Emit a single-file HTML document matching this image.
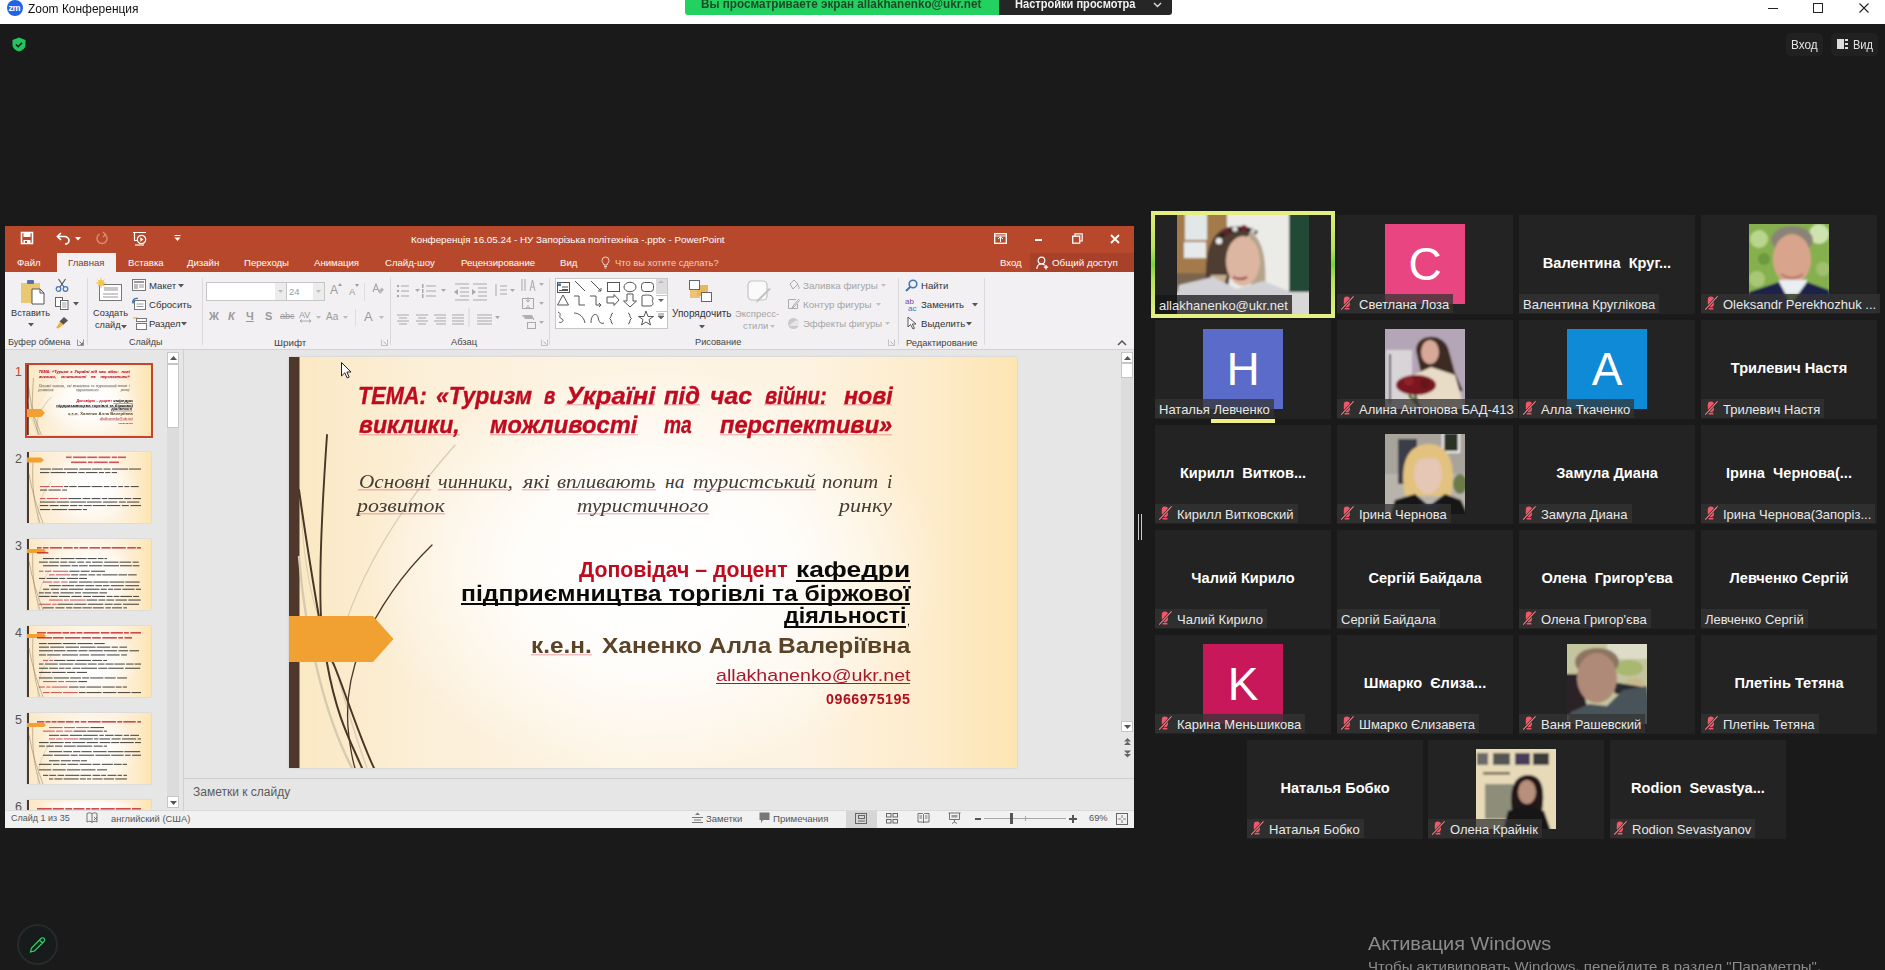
<!DOCTYPE html>
<html><head><meta charset="utf-8">
<style>
*{margin:0;padding:0;box-sizing:border-box}
html,body{width:1885px;height:970px;overflow:hidden;background:#1a1a1a;font-family:"Liberation Sans",sans-serif}
.a{position:absolute}
.t{position:absolute;white-space:nowrap;line-height:1}
/* title bar */
#tb{left:0;top:0;width:1885px;height:24px;background:#fff}
/* gallery */
.tile{position:absolute;width:176px;height:99px;background:#232323}
.lbl{position:absolute;left:0;bottom:1px;height:19px;background:rgba(52,52,52,.75);color:#e8e8e8;font-size:13px;line-height:22px;padding:0 4px 0 4px;white-space:nowrap}
.lbl.m{padding-left:22px}
.mic{position:absolute;left:4px;top:2px;width:13px;height:14px}
.cn{position:absolute;left:0;width:176px;top:40px;text-align:center;color:#fff;font-weight:bold;font-size:14.6px;line-height:17px;white-space:pre}
.wv{position:absolute;height:2px;background:linear-gradient(180deg,rgba(225,80,100,.38) 0 1px,rgba(225,80,100,.18) 1px 2px)}
.av{position:absolute;left:48px;top:9px;width:80px;height:80px;color:#fff;font-size:46px;text-align:center;line-height:80px}
</style></head><body>
<!-- Zoom title bar -->
<div class="a" style="left:0;top:0;width:1885px;height:24px;background:#fff"></div>
<div class="a" style="left:7px;top:0px;width:16px;height:16px;border-radius:50%;background:#1f63e6"></div>
<div class="t" style="left:8.5px;top:3.5px;font-size:9px;color:#fff;font-weight:bold;letter-spacing:-.4px">zm</div>
<div class="a" style="left:1768px;top:8px;width:10px;height:1px;background:#222"></div>
<div class="a" style="left:1813px;top:3px;width:10px;height:10px;border:1px solid #222"></div>
<svg class="a" style="left:1859px;top:3px" width="10" height="10" viewBox="0 0 10 10"><path d="M0.5 0.5L9.5 9.5M9.5 0.5L0.5 9.5" stroke="#222" stroke-width="1.1"/></svg>
<!-- green banner -->
<div class="a" style="left:685px;top:0;width:314px;height:15px;background:#23d160;border-bottom-left-radius:3px"></div>
<div class="a" style="left:999px;top:0;width:173px;height:15px;background:#262626;border-bottom-right-radius:3px"></div>
<svg class="a" style="left:1153px;top:2px" width="9" height="6" viewBox="0 0 9 6"><path d="M1 1L4.5 4.5L8 1" stroke="#ddd" stroke-width="1.4" fill="none"/></svg>
<!-- shield -->
<svg class="a" style="left:12px;top:37px" width="14" height="15" viewBox="0 0 14 15"><path d="M7 0.5L13.5 3V7.5C13.5 11 10.8 13.5 7 14.5C3.2 13.5 0.5 11 0.5 7.5V3Z" fill="#23c45e"/><path d="M4 7.5L6.2 9.7L10 5.7" stroke="#1a1a1a" stroke-width="1.6" fill="none"/></svg>
<!-- top-right buttons -->
<div class="a" style="left:1786px;top:33px;width:37px;height:23px;border-radius:5px;background:#212121"></div>
<div class="a" style="left:1831px;top:33px;width:47px;height:23px;border-radius:5px;background:#212121"></div>
<div class="a" style="left:1837px;top:39px;width:7px;height:10px;background:#ddd"></div>
<div class="a" style="left:1845px;top:39px;width:3px;height:2px;background:#ddd"></div>
<div class="a" style="left:1845px;top:43px;width:3px;height:2px;background:#ddd"></div>
<div class="a" style="left:1845px;top:47px;width:3px;height:2px;background:#ddd"></div>
<div class="t" style="left:28px;top:2.40px;font-size:13px;color:#111;transform:scale(0.9198,1);transform-origin:0 11.00px">Zoom Конференция</div>
<div class="t" style="left:701px;top:-1.70px;font-size:12.5px;font-weight:bold;color:#1c4a28;transform:scale(0.9371,1);transform-origin:0 10.00px">Вы просматриваете экран allakhanenko@ukr.net</div>
<div class="t" style="left:1015px;top:-1.70px;font-size:12.5px;font-weight:bold;color:#f2f2f2;transform:scale(0.8850,1);transform-origin:0 10.00px">Настройки просмотра</div>
<div class="t" style="left:1791px;top:38.60px;font-size:12.5px;color:#e6e6e6;transform:scale(0.9406,1);transform-origin:0 10.00px">Вход</div>
<div class="t" style="left:1853.4px;top:38.60px;font-size:12.5px;color:#e6e6e6;transform:scale(0.8840,1);transform-origin:0 10.00px">Вид</div>
<div class="t" style="left:1368.3px;top:934.70px;font-size:18px;color:#8c8c8c;transform:scale(1.1037,1);transform-origin:0 15.00px">Активация Windows</div>
<div class="t" style="left:1368.3px;top:959.50px;font-size:13px;color:#8c8c8c;transform:scale(1.1537,1);transform-origin:0 11.00px">Чтобы активировать Windows, перейдите в раздел &quot;Параметры&quot;.</div>
<!-- pencil -->
<div class="a" style="left:17px;top:924px;width:41px;height:41px;border-radius:50%;border:2px solid #252a2b;background:#181b1b"></div>
<svg class="a" style="left:28px;top:935px" width="19" height="19" viewBox="0 0 19 19"><path d="M2.5 17L3.5 13L13 3.5C14 2.5 15 2.5 16 3.5C17 4.5 17 5.5 16 6.5L6.5 16Z M11.5 5L14.5 8" stroke="#37d46e" stroke-width="1.1" fill="#0b2a16"/></svg>

<!-- PPT WINDOW -->
<div class="a" style="left:5px;top:226px;width:1129px;height:602px;background:#e6e6e6"></div>
<div class="a" style="left:5px;top:226px;width:1129px;height:47px;background:#b8482b"></div>
<div class="a" style="left:1030px;top:253px;width:104px;height:19px;background:#a8412a"></div>
<div class="a" style="left:57px;top:253px;width:59px;height:20px;background:#f2f0f2"></div>
<div class="a" style="left:5px;top:272px;width:1129px;height:77px;background:#f2f0f2"></div>
<div class="a" style="left:5px;top:349px;width:1129px;height:1px;background:#d2d2d2"></div>
<!-- QAT -->
<svg class="a" style="left:20px;top:231px" width="14" height="14" viewBox="0 0 14 14"><path d="M1.5 1.5H12.5V12.5H1.5Z" stroke="#fff" stroke-width="1.6" fill="none"/><rect x="3.5" y="1.5" width="7" height="4.5" fill="#fff"/><rect x="3.5" y="9" width="7" height="3.5" fill="#fff"/><rect x="5" y="10" width="2" height="2" fill="#b8482b"/></svg>
<svg class="a" style="left:56px;top:231px" width="15" height="14" viewBox="0 0 15 14"><path d="M5 2L1.5 5.5L5 9" stroke="#fff" stroke-width="1.7" fill="none"/><path d="M2 5.5H8.5C11 5.5 13 7.5 13 9.5C13 11.5 11 13 9 13" stroke="#fff" stroke-width="1.7" fill="none"/></svg>
<svg class="a" style="left:75px;top:237px" width="6" height="4" viewBox="0 0 6 4"><path d="M0 0H6L3 3.5Z" fill="#fff"/></svg>
<svg class="a" style="left:95px;top:231px" width="14" height="14" viewBox="0 0 14 14"><path d="M9.5 3.2A5 5 0 1 1 4.5 3.2" stroke="#d98a73" stroke-width="1.5" fill="none"/><path d="M8 1L10.5 3.5L8 6" stroke="#d98a73" stroke-width="1.4" fill="none"/></svg>
<svg class="a" style="left:132px;top:231px" width="15" height="15" viewBox="0 0 15 15"><path d="M1 1.5H14M2.5 1.5V9.5H6" stroke="#fff" stroke-width="1.2" fill="none"/><circle cx="9.5" cy="8.5" r="4.2" stroke="#fff" stroke-width="1.2" fill="none"/><path d="M8.3 6.3L11.5 8.5L8.3 10.7Z" fill="#fff"/><path d="M3 14H12" stroke="#fff" stroke-width="1.1"/></svg>
<svg class="a" style="left:174px;top:235px" width="7" height="7" viewBox="0 0 7 7"><path d="M0.5 0.5H6.5" stroke="#fff" stroke-width="1"/><path d="M0.5 2.5H6.5L3.5 6Z" fill="#fff"/></svg>
<div class="t" style="left:411px;top:235px;font-size:9.8px;color:#fff">Конференція 16.05.24 - НУ Запорізька політехніка -.pptx - PowerPoint</div>
<!-- window buttons -->
<svg class="a" style="left:994px;top:233px" width="13" height="11" viewBox="0 0 13 11"><rect x="0.7" y="0.7" width="11.6" height="9.6" stroke="#fff" stroke-width="1.3" fill="none"/><path d="M1 3H12M4 6L6.5 3.8L9 6M6.5 4V9" stroke="#fff" stroke-width="1" fill="none"/></svg>
<div class="a" style="left:1035px;top:239px;width:7px;height:2px;background:#fff"></div>
<svg class="a" style="left:1072px;top:233px" width="11" height="11" viewBox="0 0 11 11"><rect x="0.7" y="3.2" width="7" height="7" stroke="#fff" stroke-width="1.3" fill="none"/><path d="M3 3V0.8H10.2V8H8" stroke="#fff" stroke-width="1.2" fill="none"/></svg>
<svg class="a" style="left:1110px;top:234px" width="10" height="10" viewBox="0 0 10 10"><path d="M1 1L9 9M9 1L1 9" stroke="#fff" stroke-width="1.8"/></svg>
<!-- tabs -->
<div class="t" style="left:17px;top:258px;font-size:9.6px;color:#fff">Файл</div>
<div class="t" style="left:68px;top:258px;font-size:9.6px;color:#7b3b2a">Главная</div>
<div class="t" style="left:128px;top:258px;font-size:9.6px;color:#fff">Вставка</div>
<div class="t" style="left:187px;top:258px;font-size:9.6px;color:#fff">Дизайн</div>
<div class="t" style="left:244px;top:258px;font-size:9.6px;color:#fff">Переходы</div>
<div class="t" style="left:314px;top:258px;font-size:9.6px;color:#fff">Анимация</div>
<div class="t" style="left:385px;top:258px;font-size:9.6px;color:#fff">Слайд-шоу</div>
<div class="t" style="left:461px;top:258px;font-size:9.6px;color:#fff">Рецензирование</div>
<div class="t" style="left:560px;top:258px;font-size:9.6px;color:#fff">Вид</div>
<svg class="a" style="left:601px;top:256px" width="9" height="13" viewBox="0 0 9 13"><path d="M4.5 1A3.5 3.5 0 0 1 8 4.5C8 6.5 6.3 7.3 6 9H3C2.7 7.3 1 6.5 1 4.5A3.5 3.5 0 0 1 4.5 1Z" stroke="#f3d6cc" stroke-width="1" fill="none"/><path d="M3 10.5H6M3.5 12H5.5" stroke="#f3d6cc" stroke-width="1"/></svg>
<div class="t" style="left:615px;top:258px;font-size:9.4px;color:#f1cfc4">Что вы хотите сделать?</div>
<div class="t" style="left:1000px;top:258px;font-size:9.6px;color:#fff">Вход</div>
<svg class="a" style="left:1036px;top:256px" width="13" height="14" viewBox="0 0 13 14"><circle cx="5.5" cy="4.5" r="3.3" stroke="#fff" stroke-width="1.2" fill="none"/><path d="M0.8 13C1 9.5 3 8 5.5 8C7 8 8 8.5 8.8 9.2" stroke="#fff" stroke-width="1.2" fill="none"/><path d="M10 9V13.5M7.8 11.2H12.2" stroke="#fff" stroke-width="1.3"/></svg>
<div class="t" style="left:1052px;top:258px;font-size:9.8px;color:#fff">Общий доступ</div>
<!-- RIBBON -->
<!-- clipboard -->
<svg class="a" style="left:20px;top:279px" width="25" height="26" viewBox="0 0 25 26"><rect x="1" y="4" width="19" height="20" fill="#e8c872"/><rect x="7" y="1" width="7" height="4" rx="1" fill="#5b6fa8"/><path d="M12 10H20L24 14V25H12Z" fill="#fff" stroke="#555" stroke-width="1"/><path d="M20 10V14H24" stroke="#555" stroke-width="1" fill="none"/></svg>
<div class="t" style="left:11px;top:309px;font-size:9.2px;color:#333">Вставить</div>
<svg class="a" style="left:28px;top:323px" width="6" height="4" viewBox="0 0 6 4"><path d="M0 0H6L3 3.5Z" fill="#555"/></svg>
<svg class="a" style="left:55px;top:278px" width="14" height="14" viewBox="0 0 14 14"><path d="M3.5 1L9 9M10.5 1L5 9" stroke="#555" stroke-width="1.1"/><circle cx="3.5" cy="11" r="2.3" stroke="#3f76b8" stroke-width="1.2" fill="none"/><circle cx="10.5" cy="11" r="2.3" stroke="#3f76b8" stroke-width="1.2" fill="none"/></svg>
<svg class="a" style="left:55px;top:297px" width="14" height="13" viewBox="0 0 14 13"><rect x="0.5" y="0.5" width="7" height="9" fill="#fff" stroke="#666"/><rect x="5.5" y="3.5" width="7.5" height="9" fill="#fff" stroke="#666"/><path d="M7 6H11.5M7 8H11.5M7 10H11.5" stroke="#888" stroke-width=".8"/></svg>
<svg class="a" style="left:73px;top:302px" width="6" height="4" viewBox="0 0 6 4"><path d="M0 0H6L3 3.5Z" fill="#555"/></svg>
<svg class="a" style="left:55px;top:316px" width="14" height="13" viewBox="0 0 14 13"><path d="M9 1L13 4.5L8 9L4.5 5.5Z" fill="#555"/><path d="M5 6L1 12L3.5 12.5L8.5 8.5Z" fill="#e9b34a"/></svg>
<div class="t" style="left:8px;top:338px;font-size:9.2px;color:#444">Буфер обмена</div>
<svg class="a" style="left:77px;top:339px" width="7" height="7" viewBox="0 0 7 7"><path d="M0.5 0.5V6.5H6.5V0.5" stroke="#888" stroke-width=".9" fill="none"/><path d="M2.5 2.5L5.5 5.5M5.5 3.5V5.5H3.5" stroke="#666" stroke-width=".9" fill="none"/></svg>
<div class="a" style="left:87px;top:278px;width:1px;height:67px;background:#dadada"></div>
<!-- slides -->
<svg class="a" style="left:96px;top:278px" width="27" height="24" viewBox="0 0 27 24"><rect x="3.5" y="6.5" width="22" height="16" fill="#fff" stroke="#777"/><rect x="8" y="9" width="14" height="4" fill="#c9c9c9"/><path d="M7 16H22M7 19H22" stroke="#999" stroke-width="1"/><circle cx="5" cy="5" r="3" fill="#f3c64f"/><path d="M5 0V10M0 5H10M1.5 1.5L8.5 8.5M8.5 1.5L1.5 8.5" stroke="#f3c64f" stroke-width="1"/></svg>
<div class="t" style="left:93px;top:309px;font-size:9.2px;color:#333">Создать</div>
<div class="t" style="left:95px;top:321px;font-size:9.2px;color:#333">слайд</div>
<svg class="a" style="left:121px;top:325px" width="6" height="4" viewBox="0 0 6 4"><path d="M0 0H6L3 3.5Z" fill="#555"/></svg>
<svg class="a" style="left:132px;top:279px" width="14" height="12" viewBox="0 0 14 12"><rect x="0.5" y="0.5" width="13" height="11" fill="#fff" stroke="#777"/><rect x="2" y="2" width="10" height="2" fill="#999"/><rect x="2" y="5" width="4" height="5" fill="#bbb"/><path d="M7 6H12M7 8H12" stroke="#999"/></svg>
<div class="t" style="left:149px;top:281px;font-size:9.6px;color:#333">Макет</div>
<svg class="a" style="left:178px;top:284px" width="6" height="4" viewBox="0 0 6 4"><path d="M0 0H6L3 3.5Z" fill="#555"/></svg>
<svg class="a" style="left:132px;top:297px" width="14" height="13" viewBox="0 0 14 13"><rect x="2.5" y="3.5" width="11" height="9" fill="#fff" stroke="#777"/><path d="M4.5 7H11.5M4.5 9.5H11.5" stroke="#999"/><path d="M1 5C1 2 3 0.8 6 1.5" stroke="#3f76b8" stroke-width="1.3" fill="none"/><path d="M0 3.5L1 6L3 4" stroke="#3f76b8" stroke-width="1.2" fill="none"/></svg>
<div class="t" style="left:149px;top:300px;font-size:9.6px;color:#333">Сбросить</div>
<svg class="a" style="left:133px;top:316px" width="14" height="14" viewBox="0 0 14 14"><path d="M0 2H5" stroke="#f3c64f" stroke-width="1.6"/><rect x="3.5" y="2.5" width="10" height="3" fill="#fff" stroke="#777"/><rect x="3.5" y="7.5" width="10" height="6" fill="#fff" stroke="#777"/></svg>
<div class="t" style="left:149px;top:319px;font-size:9.6px;color:#333">Раздел</div>
<svg class="a" style="left:181px;top:322px" width="6" height="4" viewBox="0 0 6 4"><path d="M0 0H6L3 3.5Z" fill="#555"/></svg>
<div class="t" style="left:129px;top:338px;font-size:9px;color:#444">Слайды</div>
<div class="a" style="left:202px;top:278px;width:1px;height:67px;background:#dadada"></div>
<!-- font -->
<div class="a" style="left:206px;top:282px;width:81px;height:19px;background:#fff;border:1px solid #c6c6c6"></div>
<div class="a" style="left:275px;top:283px;width:11px;height:17px;background:#ececec"></div>
<svg class="a" style="left:278px;top:290px" width="5" height="3" viewBox="0 0 5 3"><path d="M0 0H5L2.5 3Z" fill="#bbb"/></svg>
<div class="a" style="left:286px;top:282px;width:39px;height:19px;background:#fff;border:1px solid #c6c6c6"></div>
<div class="a" style="left:313px;top:283px;width:11px;height:17px;background:#ececec"></div>
<svg class="a" style="left:316px;top:290px" width="5" height="3" viewBox="0 0 5 3"><path d="M0 0H5L2.5 3Z" fill="#bbb"/></svg>
<div class="t" style="left:289px;top:287px;font-size:9.5px;color:#9a9a9a">24</div>
<div class="t" style="left:330px;top:284px;font-size:12px;color:#9d9d9d">A</div>
<svg class="a" style="left:338px;top:283px" width="4" height="3" viewBox="0 0 4 3"><path d="M0 3L2 0L4 3Z" fill="#9d9d9d"/></svg>
<div class="t" style="left:349px;top:287px;font-size:9.5px;color:#9d9d9d">A</div>
<svg class="a" style="left:355px;top:284px" width="4" height="3" viewBox="0 0 4 3"><path d="M0 0L2 3L4 0Z" fill="#9d9d9d"/></svg>
<div class="a" style="left:364px;top:283px;width:1px;height:18px;background:#dedede"></div>
<svg class="a" style="left:372px;top:283px" width="12" height="13" viewBox="0 0 12 13"><path d="M1 9L4 1L7 9M2 6.5H6" stroke="#a5a5a5" stroke-width="1.1" fill="none"/><path d="M6 8L10 4.5L12 7L8 11Z" fill="#b9b9b9"/></svg>
<div class="t" style="left:209px;top:311px;font-size:11px;font-weight:bold;color:#9a9a9a">Ж</div>
<div class="t" style="left:228px;top:311px;font-size:11px;font-style:italic;font-weight:bold;color:#9a9a9a">К</div>
<div class="t" style="left:246px;top:311px;font-size:11px;font-weight:bold;color:#9a9a9a;text-decoration:underline">Ч</div>
<div class="t" style="left:265px;top:311px;font-size:11px;font-weight:bold;color:#9a9a9a">S</div>
<div class="t" style="left:280px;top:312px;font-size:9px;color:#9a9a9a;text-decoration:line-through">abc</div>
<svg class="a" style="left:299px;top:310px" width="13" height="14" viewBox="0 0 13 14"><text x="0" y="8" font-size="9" font-family="Liberation Sans" fill="#9a9a9a">AV</text><path d="M1 11H12M1 11L3 9.5M1 11L3 12.5M12 11L10 9.5M12 11L10 12.5" stroke="#9a9a9a" stroke-width=".8"/></svg>
<svg class="a" style="left:316px;top:316px" width="5" height="3" viewBox="0 0 5 3"><path d="M0 0H5L2.5 3Z" fill="#bbb"/></svg>
<div class="t" style="left:326px;top:312px;font-size:10px;color:#9a9a9a">Aa</div>
<svg class="a" style="left:343px;top:316px" width="5" height="3" viewBox="0 0 5 3"><path d="M0 0H5L2.5 3Z" fill="#bbb"/></svg>
<div class="a" style="left:355px;top:309px;width:1px;height:17px;background:#dedede"></div>
<div class="t" style="left:364px;top:310px;font-size:13px;color:#9a9a9a">A</div>
<svg class="a" style="left:379px;top:316px" width="5" height="3" viewBox="0 0 5 3"><path d="M0 0H5L2.5 3Z" fill="#bbb"/></svg>
<div class="t" style="left:274px;top:338px;font-size:9.8px;color:#444">Шрифт</div>
<svg class="a" style="left:381px;top:339px" width="7" height="7" viewBox="0 0 7 7"><path d="M0.5 0.5V6.5H6.5V0.5" stroke="#bbb" stroke-width=".9" fill="none"/><path d="M2.5 2.5L5.5 5.5" stroke="#aaa" stroke-width=".9"/></svg>
<div class="a" style="left:390px;top:278px;width:1px;height:67px;background:#dadada"></div>
<!-- paragraph -->
<svg class="a" style="left:396px;top:283px" width="270" height="48" viewBox="0 0 270 48">
 <g stroke="#a9a9a9" stroke-width="1" fill="none">
  <path d="M5 3H13M5 8H13M5 13H13"/><path d="M30 3H40M30 8H40M30 13H40"/>
  <path d="M64 5H73M64 9H73M64 13H73M59 1H73M59 17H73"/><path d="M82 5H91M82 9H91M82 13H91M77 1H91M77 17H91"/>
  <path d="M104 3H111M104 7H111M104 11H111M100 1V13"/>
  <path d="M1 32H13M3 35H11M1 38H13M3 41H11"/><path d="M20 32H32M22 35H30M20 38H32M22 41H30"/><path d="M38 32H50M40 35H50M38 38H50M40 41H50"/><path d="M56 32H68M56 35H68M56 38H68M56 41H68"/>
  <path d="M81 32H96M81 35H96M81 38H96M81 41H96"/>
 </g>
 <g fill="#a9a9a9"><circle cx="2" cy="3" r="1.2"/><circle cx="2" cy="8" r="1.2"/><circle cx="2" cy="13" r="1.2"/><rect x="26" y="1" width="1.5" height="4"/><rect x="26" y="6" width="1.5" height="4"/><rect x="26" y="11" width="1.5" height="4"/>
 <path d="M58 9L62 6V12Z"/><path d="M80 6L84 9L80 12Z" transform="translate(-4 0)"/>
 <path d="M19 6H24L21.5 9Z"/><path d="M45 6H50L47.5 9Z"/><path d="M114 6H119L116.5 9Z"/><path d="M99 33H104L101.5 36Z"/></g>
 <path d="M73 25V44" stroke="#d6d6d6"/>
</svg>
<svg class="a" style="left:521px;top:278px" width="24" height="52" viewBox="0 0 24 52">
 <g stroke="#a9a9a9" stroke-width="1" fill="none">
  <path d="M1 1V13M4 1V13M9 13L11.5 2L14 13M10 9H13"/>
  <rect x="1.5" y="20.5" width="11" height="10"/><path d="M7 19V24M5 22L7 24L9 22M7 27V31M5 29L7 31L9 29"/>
  <rect x="6.5" y="44.5" width="8" height="6"/><path d="M1 38H10L13 42"/>
 </g>
 <g fill="#b0b0b0"><path d="M18 5H23L20.5 8Z"/><path d="M18 24H23L20.5 27Z"/><path d="M18 43H23L20.5 46Z"/><path d="M2 37H11L13 41H4Z"/></g>
</svg>
<div class="t" style="left:451px;top:338px;font-size:9.3px;color:#444">Абзац</div>
<svg class="a" style="left:541px;top:339px" width="7" height="7" viewBox="0 0 7 7"><path d="M0.5 0.5V6.5H6.5V0.5" stroke="#bbb" stroke-width=".9" fill="none"/><path d="M2.5 2.5L5.5 5.5" stroke="#aaa" stroke-width=".9"/></svg>
<div class="a" style="left:549px;top:278px;width:1px;height:67px;background:#dadada"></div>
<!-- drawing -->
<div class="a" style="left:555px;top:278px;width:113px;height:51px;background:#fff;border:1px solid #c6c6c6"></div>
<div class="a" style="left:656px;top:279px;width:11px;height:15px;background:#dcdcdc"></div>
<div class="a" style="left:656px;top:295px;width:11px;height:1px;background:#c6c6c6"></div>
<div class="a" style="left:656px;top:311px;width:11px;height:1px;background:#c6c6c6"></div>
<svg class="a" style="left:556px;top:279px" width="112" height="50" viewBox="0 0 112 50">
 <g stroke="#555" stroke-width="1" fill="none">
  <rect x="1.5" y="3.5" width="12" height="10"/><path d="M6 8H12M6 10.5H12M3 11.5H12"/>
  <path d="M19 2L29 12"/><path d="M35 2L45 12M45 12V9M45 12H42"/>
  <rect x="51.5" y="3.5" width="12" height="9"/><ellipse cx="74" cy="8" rx="6" ry="4.8"/><rect x="85.5" y="3.5" width="12" height="9" rx="3"/>
  <path d="M1.5 26L7 16L12.5 26Z"/><path d="M18 17H23V26H29"/><path d="M34 17H40V26H45M43 24L45 26L43 28"/>
  <path d="M51 18H58V15.5L63 21L58 26.5V24H51Z"/><path d="M71 15V22H67.5L74 28L80.5 22H77V15Z"/><path d="M86 17C86 16 92 16 92 16C97 16 98 20 96 22C98 24 97 27 94 27H86Z"/>
  <path d="M2 33C7 35 1 38 6 40C9 41 5 45 3 43"/><path d="M18 34C23 34 28 38 29 44"/><path d="M35 44C35 34 41 34 42 38C43 44 45 45 48 44"/>
  <path d="M57 34C55 34 55 38 55 38L53.5 39.5L55 41C55 41 55 45 57 45"/><path d="M72 34C74 34 74 38 74 38L75.5 39.5L74 41C74 41 74 45 72 45"/>
  <path d="M90 32L92 37.5H97.5L93 40.5L94.5 46L90 43L85.5 46L87 40.5L82.5 37.5H88Z"/>
 </g>
 <path d="M2 4.5H5V7H2Z" fill="#3f76b8"/>
 <g fill="#666"><path d="M102 4H108L105 1.5Z" opacity=".3"/><path d="M102 20H108L105 23Z"/><path d="M102 35H108M102 37H108L105 40Z" stroke="#666" stroke-width=".8"/></g>
</svg>
<svg class="a" style="left:689px;top:280px" width="24" height="23" viewBox="0 0 24 23"><rect x="8" y="5" width="11" height="11" fill="#e8b85a"/><rect x="1" y="8" width="10" height="10" fill="#e8b85a" opacity=".8"/><rect x="0.5" y="0.5" width="10" height="9" fill="#fff" stroke="#666"/><rect x="12.5" y="12.5" width="10" height="9" fill="#fff" stroke="#666"/></svg>
<div class="t" style="left:672px;top:309px;font-size:10px;color:#333">Упорядочить</div>
<svg class="a" style="left:699px;top:325px" width="6" height="4" viewBox="0 0 6 4"><path d="M0 0H6L3 3.5Z" fill="#555"/></svg>
<svg class="a" style="left:747px;top:280px" width="26" height="25" viewBox="0 0 26 25"><rect x="1" y="1" width="19" height="19" rx="4" fill="#fafafa" stroke="#c3c3c3" stroke-width="1.2"/><path d="M24 9L12 21L9 23L10 20L22 8Z" fill="#c3c3c3"/></svg>
<div class="t" style="left:735px;top:309px;font-size:9.5px;color:#a5a5a5">Экспресс-</div>
<div class="t" style="left:743px;top:321px;font-size:9.5px;color:#a5a5a5">стили</div>
<svg class="a" style="left:770px;top:325px" width="5" height="3" viewBox="0 0 5 3"><path d="M0 0H5L2.5 3Z" fill="#c0c0c0"/></svg>
<svg class="a" style="left:787px;top:279px" width="13" height="13" viewBox="0 0 13 13"><path d="M3 5L7 1L11 5L6 10Z" stroke="#aaa" fill="none"/><path d="M11 6C12 8 12.5 9 11.5 10" stroke="#aaa" fill="none"/></svg>
<div class="t" style="left:803px;top:281px;font-size:9.8px;color:#a5a5a5">Заливка фигуры</div>
<svg class="a" style="left:881px;top:284px" width="5" height="3" viewBox="0 0 5 3"><path d="M0 0H5L2.5 3Z" fill="#c0c0c0"/></svg>
<svg class="a" style="left:787px;top:298px" width="13" height="13" viewBox="0 0 13 13"><path d="M9 1.5H1.5V10.5H10.5V6" stroke="#aaa" fill="none"/><path d="M12 1L6 8L5 10L7 9L12.5 2.5" stroke="#aaa" fill="none"/></svg>
<div class="t" style="left:803px;top:300px;font-size:9.8px;color:#a5a5a5">Контур фигуры</div>
<svg class="a" style="left:876px;top:303px" width="5" height="3" viewBox="0 0 5 3"><path d="M0 0H5L2.5 3Z" fill="#c0c0c0"/></svg>
<svg class="a" style="left:787px;top:317px" width="13" height="13" viewBox="0 0 13 13"><circle cx="6.5" cy="6.5" r="5.5" fill="#c9c9c9"/><path d="M2 9C5 5 9 3 12 3L12 9Z" fill="#e6e6e6"/></svg>
<div class="t" style="left:803px;top:319px;font-size:9.5px;color:#a5a5a5">Эффекты фигуры</div>
<svg class="a" style="left:885px;top:322px" width="5" height="3" viewBox="0 0 5 3"><path d="M0 0H5L2.5 3Z" fill="#c0c0c0"/></svg>
<div class="t" style="left:695px;top:338px;font-size:9.2px;color:#444">Рисование</div>
<svg class="a" style="left:888px;top:339px" width="7" height="7" viewBox="0 0 7 7"><path d="M0.5 0.5V6.5H6.5V0.5" stroke="#bbb" stroke-width=".9" fill="none"/><path d="M2.5 2.5L5.5 5.5" stroke="#aaa" stroke-width=".9"/></svg>
<div class="a" style="left:898px;top:278px;width:1px;height:67px;background:#dadada"></div>
<!-- editing -->
<svg class="a" style="left:905px;top:279px" width="13" height="13" viewBox="0 0 13 13"><circle cx="8" cy="5" r="3.8" stroke="#3f76b8" stroke-width="1.6" fill="none"/><path d="M5.3 7.7L1 12" stroke="#3f76b8" stroke-width="2"/></svg>
<div class="t" style="left:921px;top:281px;font-size:9.6px;color:#333">Найти</div>
<svg class="a" style="left:905px;top:297px" width="14" height="14" viewBox="0 0 14 14"><text x="0" y="7" font-size="8" font-family="Liberation Sans" fill="#7a4a9a">ab</text><text x="3" y="13.5" font-size="8" font-family="Liberation Sans" fill="#3f76b8">ac</text></svg>
<div class="t" style="left:921px;top:300px;font-size:9.6px;color:#333">Заменить</div>
<svg class="a" style="left:972px;top:303px" width="6" height="4" viewBox="0 0 6 4"><path d="M0 0H6L3 3.5Z" fill="#555"/></svg>
<svg class="a" style="left:907px;top:316px" width="10" height="14" viewBox="0 0 10 14"><path d="M1 1V11L3.5 8.5L6 13L7.5 12.3L5.3 8H9Z" stroke="#555" stroke-width="1" fill="#fff"/></svg>
<div class="t" style="left:921px;top:319px;font-size:9.6px;color:#333">Выделить</div>
<svg class="a" style="left:966px;top:322px" width="6" height="4" viewBox="0 0 6 4"><path d="M0 0H6L3 3.5Z" fill="#555"/></svg>
<div class="t" style="left:906px;top:338px;font-size:9.4px;color:#444">Редактирование</div>
<div class="a" style="left:984px;top:278px;width:1px;height:67px;background:#dadada"></div>
<svg class="a" style="left:1117px;top:339px" width="10" height="7" viewBox="0 0 10 7"><path d="M1 6L5 2L9 6" stroke="#555" stroke-width="1.5" fill="none"/></svg>
<!-- THUMBS -->
<div class="a" style="left:183px;top:350px;width:1px;height:460px;background:#d0d0d0"></div>
<div class="a" style="left:25px;top:363px;width:128px;height:75px;border:2px solid #c8432a"></div>
<div class="t" style="left:15px;top:366px;font-size:12.5px;color:#c8432a">1</div>
<div class="a" style="left:27px;top:452px;width:124px;height:71px;overflow:hidden;background:radial-gradient(ellipse 40% 50% at 50% 52%,rgba(255,255,255,1) 0%,rgba(255,255,255,.85) 45%,rgba(255,255,255,0) 100%),linear-gradient(90deg,#fbe8c2 0%,#fcefd8 18%,#fdf4e4 45%,#fdf3e2 70%,#fdeccb 88%,#fde5b2 100%);box-shadow:0 0 1px rgba(0,0,0,.25)"><svg class="a" style="left:0;top:0" width="124" height="71" viewBox="0 0 124 71"><rect width="2" height="71" fill="#4d382b"/><path d="M2 22C5 40 10 55 16 71M6 10C5 30 6 50 13 71" stroke="#8b7664" stroke-width=".5" fill="none"/><path d="M24 30C15 40 10 55 11 71" stroke="#b9a994" stroke-width=".4" fill="none"/><path d="M0 5.5H14L17 8L14 10.5H0Z" fill="#f0a131"/><rect x="39.0" y="4.5" width="5.6" height="1.6" fill="#c0202a" opacity="0.75"/><rect x="46.1" y="4.5" width="13.2" height="1.6" fill="#c0202a" opacity="0.75"/><rect x="60.3" y="4.5" width="9.9" height="1.6" fill="#c0202a" opacity="0.75"/><rect x="71.5" y="4.5" width="11.8" height="1.6" fill="#c0202a" opacity="0.75"/><rect x="84.8" y="4.5" width="5.1" height="1.6" fill="#c0202a" opacity="0.75"/><rect x="90.8" y="4.5" width="8.2" height="1.6" fill="#c0202a" opacity="0.75"/><rect x="44.0" y="9.5" width="15.5" height="1.6" fill="#c0202a" opacity="0.75"/><rect x="61.0" y="9.5" width="4.7" height="1.6" fill="#c0202a" opacity="0.75"/><rect x="66.7" y="9.5" width="14.0" height="1.6" fill="#c0202a" opacity="0.75"/><rect x="82.1" y="9.5" width="9.9" height="1.6" fill="#c0202a" opacity="0.75"/><rect x="13.0" y="16.5" width="10.9" height="1.1" fill="#111" opacity="0.72"/><rect x="25.1" y="16.5" width="10.9" height="1.1" fill="#111" opacity="0.72"/><rect x="37.0" y="16.5" width="13.8" height="1.1" fill="#111" opacity="0.72"/><rect x="52.3" y="16.5" width="11.8" height="1.1" fill="#111" opacity="0.72"/><rect x="65.1" y="16.5" width="10.2" height="1.1" fill="#111" opacity="0.72"/><rect x="76.5" y="16.5" width="7.0" height="1.1" fill="#111" opacity="0.72"/><rect x="85.1" y="16.5" width="16.0" height="1.1" fill="#111" opacity="0.72"/><rect x="102.0" y="16.5" width="12.0" height="1.1" fill="#111" opacity="0.72"/><rect x="13.0" y="20.0" width="9.4" height="1.1" fill="#111" opacity="0.72"/><rect x="23.7" y="20.0" width="15.1" height="1.1" fill="#111" opacity="0.72"/><rect x="40.0" y="20.0" width="10.1" height="1.1" fill="#111" opacity="0.72"/><rect x="51.4" y="20.0" width="6.2" height="1.1" fill="#111" opacity="0.72"/><rect x="58.9" y="20.0" width="11.6" height="1.1" fill="#111" opacity="0.72"/><rect x="71.9" y="20.0" width="5.1" height="1.1" fill="#111" opacity="0.72"/><rect x="78.2" y="20.0" width="5.1" height="1.1" fill="#111" opacity="0.72"/><rect x="84.7" y="20.0" width="5.3" height="1.1" fill="#111" opacity="0.72"/><rect x="13.0" y="34.0" width="9.7" height="1.1" fill="#c0202a" opacity="0.72"/><rect x="24.1" y="34.0" width="12.0" height="1.1" fill="#c0202a" opacity="0.72"/><rect x="37.1" y="34.0" width="4.1" height="1.1" fill="#111" opacity="0.72"/><rect x="42.3" y="34.0" width="7.3" height="1.1" fill="#111" opacity="0.72"/><rect x="51.1" y="34.0" width="12.3" height="1.1" fill="#111" opacity="0.72"/><rect x="64.7" y="34.0" width="10.7" height="1.1" fill="#111" opacity="0.72"/><rect x="76.8" y="34.0" width="5.7" height="1.1" fill="#111" opacity="0.72"/><rect x="83.7" y="34.0" width="5.9" height="1.1" fill="#111" opacity="0.72"/><rect x="91.2" y="34.0" width="4.7" height="1.1" fill="#111" opacity="0.72"/><rect x="97.4" y="34.0" width="4.9" height="1.1" fill="#111" opacity="0.72"/><rect x="103.7" y="34.0" width="8.0" height="1.1" fill="#111" opacity="0.72"/><rect x="13.0" y="37.5" width="7.1" height="1.1" fill="#111" opacity="0.72"/><rect x="21.5" y="37.5" width="12.2" height="1.1" fill="#111" opacity="0.72"/><rect x="35.2" y="37.5" width="4.8" height="1.1" fill="#111" opacity="0.72"/><rect x="13.0" y="46.0" width="5.3" height="1.1" fill="#c0202a" opacity="0.72"/><rect x="19.7" y="46.0" width="11.8" height="1.1" fill="#c0202a" opacity="0.72"/><rect x="33.1" y="46.0" width="7.3" height="1.1" fill="#c0202a" opacity="0.72"/><rect x="41.4" y="46.0" width="12.8" height="1.1" fill="#111" opacity="0.72"/><rect x="55.6" y="46.0" width="7.6" height="1.1" fill="#111" opacity="0.72"/><rect x="64.6" y="46.0" width="8.8" height="1.1" fill="#111" opacity="0.72"/><rect x="74.8" y="46.0" width="5.4" height="1.1" fill="#111" opacity="0.72"/><rect x="81.3" y="46.0" width="14.8" height="1.1" fill="#111" opacity="0.72"/><rect x="97.2" y="46.0" width="7.1" height="1.1" fill="#111" opacity="0.72"/><rect x="105.8" y="46.0" width="8.2" height="1.1" fill="#111" opacity="0.72"/><rect x="13.0" y="49.5" width="15.6" height="1.1" fill="#111" opacity="0.72"/><rect x="29.5" y="49.5" width="12.8" height="1.1" fill="#111" opacity="0.72"/><rect x="43.3" y="49.5" width="15.8" height="1.1" fill="#111" opacity="0.72"/><rect x="60.1" y="49.5" width="14.6" height="1.1" fill="#111" opacity="0.72"/><rect x="76.0" y="49.5" width="14.3" height="1.1" fill="#111" opacity="0.72"/><rect x="91.9" y="49.5" width="6.9" height="1.1" fill="#111" opacity="0.72"/><rect x="99.9" y="49.5" width="12.5" height="1.1" fill="#111" opacity="0.72"/><rect x="13.0" y="53.0" width="8.3" height="1.1" fill="#111" opacity="0.72"/><rect x="22.6" y="53.0" width="9.0" height="1.1" fill="#111" opacity="0.72"/><rect x="32.8" y="53.0" width="8.9" height="1.1" fill="#111" opacity="0.72"/><rect x="43.1" y="53.0" width="7.1" height="1.1" fill="#111" opacity="0.72"/><rect x="51.5" y="53.0" width="4.1" height="1.1" fill="#111" opacity="0.72"/><rect x="56.7" y="53.0" width="8.0" height="1.1" fill="#111" opacity="0.72"/><rect x="65.8" y="53.0" width="12.9" height="1.1" fill="#111" opacity="0.72"/><rect x="79.8" y="53.0" width="13.5" height="1.1" fill="#111" opacity="0.72"/><rect x="94.8" y="53.0" width="7.0" height="1.1" fill="#111" opacity="0.72"/><rect x="103.4" y="53.0" width="10.6" height="1.1" fill="#111" opacity="0.72"/><rect x="13.0" y="57.0" width="10.3" height="1.1" fill="#111" opacity="0.72"/><rect x="24.7" y="57.0" width="15.5" height="1.1" fill="#111" opacity="0.72"/><rect x="41.4" y="57.0" width="13.2" height="1.1" fill="#111" opacity="0.72"/><rect x="55.9" y="57.0" width="4.1" height="1.1" fill="#111" opacity="0.72"/></svg></div>
<div class="t" style="left:15px;top:453px;font-size:12.5px;color:#555">2</div>
<div class="a" style="left:27px;top:539px;width:124px;height:71px;overflow:hidden;background:radial-gradient(ellipse 40% 50% at 50% 52%,rgba(255,255,255,1) 0%,rgba(255,255,255,.85) 45%,rgba(255,255,255,0) 100%),linear-gradient(90deg,#fbe8c2 0%,#fcefd8 18%,#fdf4e4 45%,#fdf3e2 70%,#fdeccb 88%,#fde5b2 100%);box-shadow:0 0 1px rgba(0,0,0,.25)"><svg class="a" style="left:0;top:0" width="124" height="71" viewBox="0 0 124 71"><rect width="2" height="71" fill="#4d382b"/><path d="M2 22C5 40 10 55 16 71M6 10C5 30 6 50 13 71" stroke="#8b7664" stroke-width=".5" fill="none"/><path d="M24 30C15 40 10 55 11 71" stroke="#b9a994" stroke-width=".4" fill="none"/><path d="M0 10H17L19 12L17 14H0Z" fill="#f0a131"/><rect x="10.0" y="8.0" width="4.5" height="1.6" fill="#c0202a" opacity="0.8"/><rect x="15.8" y="8.0" width="5.7" height="1.6" fill="#c0202a" opacity="0.8"/><rect x="22.8" y="8.0" width="12.1" height="1.6" fill="#c0202a" opacity="0.8"/><rect x="36.3" y="8.0" width="9.4" height="1.6" fill="#c0202a" opacity="0.8"/><rect x="47.0" y="8.0" width="4.2" height="1.6" fill="#c0202a" opacity="0.8"/><rect x="52.4" y="8.0" width="8.5" height="1.6" fill="#c0202a" opacity="0.8"/><rect x="62.4" y="8.0" width="10.6" height="1.6" fill="#c0202a" opacity="0.8"/><rect x="74.4" y="8.0" width="9.2" height="1.6" fill="#c0202a" opacity="0.8"/><rect x="84.6" y="8.0" width="14.2" height="1.6" fill="#c0202a" opacity="0.8"/><rect x="100.3" y="8.0" width="8.5" height="1.6" fill="#c0202a" opacity="0.8"/><rect x="109.8" y="8.0" width="4.2" height="1.6" fill="#c0202a" opacity="0.8"/><rect x="10.0" y="13.0" width="11.4" height="1.6" fill="#c0202a" opacity="0.8"/><rect x="16.0" y="19.0" width="11.2" height="1.1" fill="#111" opacity="0.72"/><rect x="28.3" y="19.0" width="4.0" height="1.1" fill="#111" opacity="0.72"/><rect x="33.5" y="19.0" width="13.9" height="1.1" fill="#111" opacity="0.72"/><rect x="48.5" y="19.0" width="11.0" height="1.1" fill="#111" opacity="0.72"/><rect x="60.5" y="19.0" width="9.1" height="1.1" fill="#111" opacity="0.72"/><rect x="70.8" y="19.0" width="5.7" height="1.1" fill="#111" opacity="0.72"/><rect x="77.5" y="19.0" width="2.5" height="1.1" fill="#111" opacity="0.72"/><rect x="12.0" y="22.6" width="8.8" height="1.1" fill="#111" opacity="0.72"/><rect x="22.2" y="22.6" width="9.9" height="1.1" fill="#111" opacity="0.72"/><rect x="33.4" y="22.6" width="6.8" height="1.1" fill="#111" opacity="0.72"/><rect x="41.6" y="22.6" width="7.1" height="1.1" fill="#111" opacity="0.72"/><rect x="50.2" y="22.6" width="6.9" height="1.1" fill="#111" opacity="0.72"/><rect x="58.7" y="22.6" width="5.1" height="1.1" fill="#111" opacity="0.72"/><rect x="65.1" y="22.6" width="10.6" height="1.1" fill="#111" opacity="0.72"/><rect x="77.3" y="22.6" width="14.1" height="1.1" fill="#111" opacity="0.72"/><rect x="92.5" y="22.6" width="11.6" height="1.1" fill="#111" opacity="0.72"/><rect x="105.6" y="22.6" width="6.1" height="1.1" fill="#111" opacity="0.72"/><rect x="16.0" y="26.2" width="15.6" height="1.1" fill="#111" opacity="0.72"/><rect x="32.9" y="26.2" width="10.6" height="1.1" fill="#111" opacity="0.72"/><rect x="44.7" y="26.2" width="6.3" height="1.1" fill="#111" opacity="0.72"/><rect x="51.9" y="26.2" width="8.8" height="1.1" fill="#111" opacity="0.72"/><rect x="62.0" y="26.2" width="13.3" height="1.1" fill="#111" opacity="0.72"/><rect x="76.4" y="26.2" width="15.6" height="1.1" fill="#111" opacity="0.72"/><rect x="93.0" y="26.2" width="11.9" height="1.1" fill="#111" opacity="0.72"/><rect x="105.8" y="26.2" width="6.6" height="1.1" fill="#111" opacity="0.72"/><rect x="12.0" y="31.7" width="4.4" height="1.1" fill="#c0202a" opacity="0.72"/><rect x="18.0" y="31.7" width="6.3" height="1.1" fill="#c0202a" opacity="0.72"/><rect x="25.9" y="31.7" width="15.4" height="1.1" fill="#c0202a" opacity="0.72"/><rect x="42.3" y="31.7" width="10.2" height="1.1" fill="#111" opacity="0.72"/><rect x="53.7" y="31.7" width="8.9" height="1.1" fill="#111" opacity="0.72"/><rect x="64.1" y="31.7" width="13.9" height="1.1" fill="#111" opacity="0.72"/><rect x="22.0" y="35.3" width="5.6" height="1.1" fill="#c0202a" opacity="0.72"/><rect x="28.8" y="35.3" width="14.2" height="1.1" fill="#c0202a" opacity="0.72"/><rect x="44.2" y="35.3" width="6.8" height="1.1" fill="#111" opacity="0.72"/><rect x="52.4" y="35.3" width="7.7" height="1.1" fill="#111" opacity="0.72"/><rect x="61.4" y="35.3" width="6.8" height="1.1" fill="#111" opacity="0.72"/><rect x="69.6" y="35.3" width="4.6" height="1.1" fill="#111" opacity="0.72"/><rect x="75.3" y="35.3" width="15.2" height="1.1" fill="#111" opacity="0.72"/><rect x="91.4" y="35.3" width="8.7" height="1.1" fill="#111" opacity="0.72"/><rect x="101.1" y="35.3" width="8.6" height="1.1" fill="#111" opacity="0.72"/><rect x="12.0" y="38.9" width="6.2" height="1.1" fill="#111" opacity="0.72"/><rect x="19.5" y="38.9" width="11.6" height="1.1" fill="#111" opacity="0.72"/><rect x="32.2" y="38.9" width="6.1" height="1.1" fill="#111" opacity="0.72"/><rect x="39.7" y="38.9" width="11.4" height="1.1" fill="#111" opacity="0.72"/><rect x="52.1" y="38.9" width="7.9" height="1.1" fill="#111" opacity="0.72"/><rect x="16.0" y="42.5" width="9.2" height="1.1" fill="#c0202a" opacity="0.72"/><rect x="26.4" y="42.5" width="6.3" height="1.1" fill="#c0202a" opacity="0.72"/><rect x="34.1" y="42.5" width="6.5" height="1.1" fill="#c0202a" opacity="0.72"/><rect x="42.0" y="42.5" width="8.5" height="1.1" fill="#111" opacity="0.72"/><rect x="52.0" y="42.5" width="13.4" height="1.1" fill="#111" opacity="0.72"/><rect x="66.3" y="42.5" width="15.3" height="1.1" fill="#111" opacity="0.72"/><rect x="82.5" y="42.5" width="14.8" height="1.1" fill="#111" opacity="0.72"/><rect x="98.3" y="42.5" width="14.4" height="1.1" fill="#111" opacity="0.72"/><rect x="22.0" y="46.1" width="11.7" height="1.1" fill="#111" opacity="0.72"/><rect x="34.8" y="46.1" width="12.3" height="1.1" fill="#111" opacity="0.72"/><rect x="48.3" y="46.1" width="9.1" height="1.1" fill="#111" opacity="0.72"/><rect x="58.4" y="46.1" width="8.7" height="1.1" fill="#111" opacity="0.72"/><rect x="68.4" y="46.1" width="6.5" height="1.1" fill="#111" opacity="0.72"/><rect x="76.0" y="46.1" width="6.5" height="1.1" fill="#111" opacity="0.72"/><rect x="83.9" y="46.1" width="12.9" height="1.1" fill="#111" opacity="0.72"/><rect x="98.3" y="46.1" width="13.7" height="1.1" fill="#111" opacity="0.72"/><rect x="16.0" y="49.7" width="6.2" height="1.1" fill="#111" opacity="0.72"/><rect x="23.8" y="49.7" width="8.3" height="1.1" fill="#111" opacity="0.72"/><rect x="33.6" y="49.7" width="7.2" height="1.1" fill="#111" opacity="0.72"/><rect x="42.0" y="49.7" width="14.3" height="1.1" fill="#111" opacity="0.72"/><rect x="57.8" y="49.7" width="14.6" height="1.1" fill="#111" opacity="0.72"/><rect x="73.7" y="49.7" width="6.1" height="1.1" fill="#111" opacity="0.72"/><rect x="81.1" y="49.7" width="5.0" height="1.1" fill="#111" opacity="0.72"/><rect x="87.1" y="49.7" width="7.0" height="1.1" fill="#111" opacity="0.72"/><rect x="95.4" y="49.7" width="12.2" height="1.1" fill="#111" opacity="0.72"/><rect x="108.9" y="49.7" width="5.1" height="1.1" fill="#111" opacity="0.72"/><rect x="12.0" y="53.3" width="4.8" height="1.1" fill="#111" opacity="0.72"/><rect x="17.7" y="53.3" width="6.4" height="1.1" fill="#111" opacity="0.72"/><rect x="25.6" y="53.3" width="6.4" height="1.1" fill="#111" opacity="0.72"/><rect x="33.4" y="53.3" width="13.2" height="1.1" fill="#111" opacity="0.72"/><rect x="47.8" y="53.3" width="6.2" height="1.1" fill="#111" opacity="0.72"/><rect x="55.5" y="53.3" width="15.7" height="1.1" fill="#111" opacity="0.72"/><rect x="72.4" y="53.3" width="7.6" height="1.1" fill="#111" opacity="0.72"/><rect x="12.0" y="56.9" width="10.6" height="1.1" fill="#111" opacity="0.72"/><rect x="23.6" y="56.9" width="7.1" height="1.1" fill="#111" opacity="0.72"/><rect x="31.9" y="56.9" width="11.1" height="1.1" fill="#111" opacity="0.72"/><rect x="44.4" y="56.9" width="10.3" height="1.1" fill="#111" opacity="0.72"/><rect x="56.2" y="56.9" width="7.8" height="1.1" fill="#111" opacity="0.72"/><rect x="65.2" y="56.9" width="12.9" height="1.1" fill="#111" opacity="0.72"/><rect x="79.6" y="56.9" width="5.9" height="1.1" fill="#111" opacity="0.72"/><rect x="86.6" y="56.9" width="5.7" height="1.1" fill="#111" opacity="0.72"/><rect x="93.3" y="56.9" width="11.7" height="1.1" fill="#111" opacity="0.72"/><rect x="106.1" y="56.9" width="5.9" height="1.1" fill="#111" opacity="0.72"/><rect x="22.0" y="60.5" width="13.8" height="1.1" fill="#c0202a" opacity="0.72"/><rect x="36.9" y="60.5" width="4.9" height="1.1" fill="#c0202a" opacity="0.72"/><rect x="43.0" y="60.5" width="15.6" height="1.1" fill="#c0202a" opacity="0.72"/><rect x="59.6" y="60.5" width="10.6" height="1.1" fill="#111" opacity="0.72"/><rect x="71.5" y="60.5" width="6.7" height="1.1" fill="#111" opacity="0.72"/><rect x="79.4" y="60.5" width="7.7" height="1.1" fill="#111" opacity="0.72"/><rect x="88.5" y="60.5" width="11.4" height="1.1" fill="#111" opacity="0.72"/><rect x="101.3" y="60.5" width="12.4" height="1.1" fill="#111" opacity="0.72"/><rect x="12.0" y="64.7" width="11.8" height="1.1" fill="#c0202a" opacity="0.72"/><rect x="25.2" y="64.7" width="4.4" height="1.1" fill="#c0202a" opacity="0.72"/><rect x="30.6" y="64.7" width="15.7" height="1.1" fill="#111" opacity="0.72"/><rect x="47.2" y="64.7" width="12.2" height="1.1" fill="#111" opacity="0.72"/><rect x="60.7" y="64.7" width="15.6" height="1.1" fill="#111" opacity="0.72"/><rect x="77.7" y="64.7" width="8.0" height="1.1" fill="#111" opacity="0.72"/><rect x="86.7" y="64.7" width="7.8" height="1.1" fill="#111" opacity="0.72"/><rect x="96.0" y="64.7" width="16.0" height="1.1" fill="#111" opacity="0.72"/><rect x="16.0" y="68.3" width="10.8" height="1.1" fill="#111" opacity="0.72"/><rect x="28.4" y="68.3" width="9.1" height="1.1" fill="#111" opacity="0.72"/><rect x="39.0" y="68.3" width="6.3" height="1.1" fill="#111" opacity="0.72"/><rect x="46.3" y="68.3" width="8.2" height="1.1" fill="#111" opacity="0.72"/><rect x="55.4" y="68.3" width="9.4" height="1.1" fill="#111" opacity="0.72"/><rect x="65.9" y="68.3" width="10.9" height="1.1" fill="#111" opacity="0.72"/><rect x="78.4" y="68.3" width="5.5" height="1.1" fill="#111" opacity="0.72"/><rect x="85.0" y="68.3" width="10.0" height="1.1" fill="#111" opacity="0.72"/><rect x="96.4" y="68.3" width="3.6" height="1.1" fill="#111" opacity="0.72"/></svg></div>
<div class="t" style="left:15px;top:540px;font-size:12.5px;color:#555">3</div>
<div class="a" style="left:27px;top:626px;width:124px;height:71px;overflow:hidden;background:radial-gradient(ellipse 40% 50% at 50% 52%,rgba(255,255,255,1) 0%,rgba(255,255,255,.85) 45%,rgba(255,255,255,0) 100%),linear-gradient(90deg,#fbe8c2 0%,#fcefd8 18%,#fdf4e4 45%,#fdf3e2 70%,#fdeccb 88%,#fde5b2 100%);box-shadow:0 0 1px rgba(0,0,0,.25)"><svg class="a" style="left:0;top:0" width="124" height="71" viewBox="0 0 124 71"><rect width="2" height="71" fill="#4d382b"/><path d="M2 22C5 40 10 55 16 71M6 10C5 30 6 50 13 71" stroke="#8b7664" stroke-width=".5" fill="none"/><path d="M24 30C15 40 10 55 11 71" stroke="#b9a994" stroke-width=".4" fill="none"/><path d="M0 8H17L19 10L17 12H0Z" fill="#f0a131"/><rect x="10.0" y="6.0" width="8.9" height="1.6" fill="#c0202a" opacity="0.8"/><rect x="20.2" y="6.0" width="14.3" height="1.6" fill="#c0202a" opacity="0.8"/><rect x="35.5" y="6.0" width="6.7" height="1.6" fill="#c0202a" opacity="0.8"/><rect x="43.2" y="6.0" width="5.4" height="1.6" fill="#c0202a" opacity="0.8"/><rect x="49.5" y="6.0" width="5.9" height="1.6" fill="#c0202a" opacity="0.8"/><rect x="56.6" y="6.0" width="15.9" height="1.6" fill="#c0202a" opacity="0.8"/><rect x="73.9" y="6.0" width="8.5" height="1.6" fill="#c0202a" opacity="0.8"/><rect x="83.6" y="6.0" width="12.3" height="1.6" fill="#c0202a" opacity="0.8"/><rect x="97.0" y="6.0" width="4.9" height="1.6" fill="#c0202a" opacity="0.8"/><rect x="103.4" y="6.0" width="10.6" height="1.6" fill="#c0202a" opacity="0.8"/><rect x="10.0" y="11.0" width="15.0" height="1.6" fill="#c0202a" opacity="0.8"/><rect x="26.0" y="11.0" width="10.7" height="1.6" fill="#c0202a" opacity="0.8"/><rect x="37.9" y="11.0" width="15.5" height="1.6" fill="#c0202a" opacity="0.8"/><rect x="54.5" y="11.0" width="9.4" height="1.6" fill="#c0202a" opacity="0.8"/><rect x="65.2" y="11.0" width="8.6" height="1.6" fill="#c0202a" opacity="0.8"/><rect x="75.3" y="11.0" width="14.5" height="1.6" fill="#c0202a" opacity="0.8"/><rect x="91.3" y="11.0" width="4.7" height="1.6" fill="#c0202a" opacity="0.8"/><rect x="97.5" y="11.0" width="7.5" height="1.6" fill="#c0202a" opacity="0.8"/><rect x="12.0" y="17.0" width="7.7" height="1.1" fill="#111" opacity="0.72"/><rect x="20.8" y="17.0" width="13.8" height="1.1" fill="#111" opacity="0.72"/><rect x="35.8" y="17.0" width="13.4" height="1.1" fill="#111" opacity="0.72"/><rect x="50.4" y="17.0" width="15.2" height="1.1" fill="#111" opacity="0.72"/><rect x="67.1" y="17.0" width="10.6" height="1.1" fill="#111" opacity="0.72"/><rect x="12.0" y="20.6" width="10.0" height="1.1" fill="#111" opacity="0.72"/><rect x="23.2" y="20.6" width="13.9" height="1.1" fill="#111" opacity="0.72"/><rect x="38.5" y="20.6" width="13.5" height="1.1" fill="#111" opacity="0.72"/><rect x="53.2" y="20.6" width="15.4" height="1.1" fill="#111" opacity="0.72"/><rect x="69.7" y="20.6" width="13.5" height="1.1" fill="#111" opacity="0.72"/><rect x="84.6" y="20.6" width="6.2" height="1.1" fill="#111" opacity="0.72"/><rect x="92.4" y="20.6" width="7.6" height="1.1" fill="#111" opacity="0.72"/><rect x="12.0" y="24.2" width="13.9" height="1.1" fill="#111" opacity="0.72"/><rect x="26.8" y="24.2" width="11.7" height="1.1" fill="#111" opacity="0.72"/><rect x="39.7" y="24.2" width="10.6" height="1.1" fill="#111" opacity="0.72"/><rect x="51.5" y="24.2" width="8.9" height="1.1" fill="#111" opacity="0.72"/><rect x="61.7" y="24.2" width="14.1" height="1.1" fill="#111" opacity="0.72"/><rect x="76.8" y="24.2" width="13.2" height="1.1" fill="#111" opacity="0.72"/><rect x="91.4" y="24.2" width="9.7" height="1.1" fill="#111" opacity="0.72"/><rect x="102.5" y="24.2" width="9.5" height="1.1" fill="#111" opacity="0.72"/><rect x="12.0" y="28.4" width="7.0" height="1.1" fill="#111" opacity="0.72"/><rect x="20.1" y="28.4" width="13.4" height="1.1" fill="#111" opacity="0.72"/><rect x="35.1" y="28.4" width="15.9" height="1.1" fill="#111" opacity="0.72"/><rect x="52.4" y="28.4" width="9.7" height="1.1" fill="#111" opacity="0.72"/><rect x="63.7" y="28.4" width="14.5" height="1.1" fill="#111" opacity="0.72"/><rect x="79.7" y="28.4" width="12.9" height="1.1" fill="#111" opacity="0.72"/><rect x="94.2" y="28.4" width="5.8" height="1.1" fill="#111" opacity="0.72"/><rect x="16.0" y="33.9" width="5.0" height="1.1" fill="#c0202a" opacity="0.72"/><rect x="22.2" y="33.9" width="4.0" height="1.1" fill="#c0202a" opacity="0.72"/><rect x="27.2" y="33.9" width="11.2" height="1.1" fill="#111" opacity="0.72"/><rect x="39.5" y="33.9" width="8.8" height="1.1" fill="#111" opacity="0.72"/><rect x="49.3" y="33.9" width="14.6" height="1.1" fill="#111" opacity="0.72"/><rect x="65.2" y="33.9" width="9.8" height="1.1" fill="#111" opacity="0.72"/><rect x="76.2" y="33.9" width="3.8" height="1.1" fill="#111" opacity="0.72"/><rect x="12.0" y="37.5" width="4.5" height="1.1" fill="#111" opacity="0.72"/><rect x="18.1" y="37.5" width="12.7" height="1.1" fill="#111" opacity="0.72"/><rect x="32.2" y="37.5" width="14.1" height="1.1" fill="#111" opacity="0.72"/><rect x="47.7" y="37.5" width="12.0" height="1.1" fill="#111" opacity="0.72"/><rect x="60.7" y="37.5" width="8.9" height="1.1" fill="#111" opacity="0.72"/><rect x="70.8" y="37.5" width="6.7" height="1.1" fill="#111" opacity="0.72"/><rect x="78.6" y="37.5" width="8.0" height="1.1" fill="#111" opacity="0.72"/><rect x="87.5" y="37.5" width="10.3" height="1.1" fill="#111" opacity="0.72"/><rect x="99.1" y="37.5" width="7.5" height="1.1" fill="#111" opacity="0.72"/><rect x="107.6" y="37.5" width="6.4" height="1.1" fill="#111" opacity="0.72"/><rect x="12.0" y="41.7" width="9.1" height="1.1" fill="#111" opacity="0.72"/><rect x="22.2" y="41.7" width="8.7" height="1.1" fill="#111" opacity="0.72"/><rect x="32.1" y="41.7" width="5.4" height="1.1" fill="#111" opacity="0.72"/><rect x="38.4" y="41.7" width="5.6" height="1.1" fill="#111" opacity="0.72"/><rect x="45.5" y="41.7" width="7.7" height="1.1" fill="#111" opacity="0.72"/><rect x="54.2" y="41.7" width="15.8" height="1.1" fill="#111" opacity="0.72"/><rect x="71.3" y="41.7" width="9.0" height="1.1" fill="#111" opacity="0.72"/><rect x="81.3" y="41.7" width="15.4" height="1.1" fill="#111" opacity="0.72"/><rect x="98.1" y="41.7" width="15.1" height="1.1" fill="#111" opacity="0.72"/><rect x="12.0" y="45.9" width="11.9" height="1.1" fill="#111" opacity="0.72"/><rect x="24.9" y="45.9" width="13.8" height="1.1" fill="#111" opacity="0.72"/><rect x="40.0" y="45.9" width="8.4" height="1.1" fill="#111" opacity="0.72"/><rect x="49.8" y="45.9" width="10.2" height="1.1" fill="#111" opacity="0.72"/><rect x="12.0" y="51.4" width="13.6" height="1.1" fill="#111" opacity="0.72"/><rect x="26.8" y="51.4" width="15.3" height="1.1" fill="#111" opacity="0.72"/><rect x="43.2" y="51.4" width="10.8" height="1.1" fill="#111" opacity="0.72"/><rect x="55.2" y="51.4" width="7.0" height="1.1" fill="#111" opacity="0.72"/><rect x="63.2" y="51.4" width="13.2" height="1.1" fill="#111" opacity="0.72"/><rect x="77.6" y="51.4" width="11.1" height="1.1" fill="#111" opacity="0.72"/><rect x="90.2" y="51.4" width="9.8" height="1.1" fill="#111" opacity="0.72"/><rect x="16.0" y="55.0" width="13.9" height="1.1" fill="#c0202a" opacity="0.72"/><rect x="31.2" y="55.0" width="5.8" height="1.1" fill="#c0202a" opacity="0.72"/><rect x="38.5" y="55.0" width="11.6" height="1.1" fill="#c0202a" opacity="0.72"/><rect x="51.3" y="55.0" width="8.7" height="1.1" fill="#111" opacity="0.72"/><rect x="12.0" y="60.5" width="5.8" height="1.1" fill="#c0202a" opacity="0.72"/><rect x="19.3" y="60.5" width="4.2" height="1.1" fill="#c0202a" opacity="0.72"/><rect x="24.7" y="60.5" width="15.9" height="1.1" fill="#c0202a" opacity="0.72"/><rect x="41.9" y="60.5" width="9.6" height="1.1" fill="#111" opacity="0.72"/><rect x="52.5" y="60.5" width="5.9" height="1.1" fill="#111" opacity="0.72"/><rect x="59.4" y="60.5" width="14.7" height="1.1" fill="#111" opacity="0.72"/><rect x="75.5" y="60.5" width="12.2" height="1.1" fill="#111" opacity="0.72"/><rect x="88.7" y="60.5" width="5.9" height="1.1" fill="#111" opacity="0.72"/><rect x="95.8" y="60.5" width="4.2" height="1.1" fill="#111" opacity="0.72"/><rect x="16.0" y="66.0" width="6.6" height="1.1" fill="#c0202a" opacity="0.72"/><rect x="23.7" y="66.0" width="11.2" height="1.1" fill="#c0202a" opacity="0.72"/><rect x="36.0" y="66.0" width="14.7" height="1.1" fill="#c0202a" opacity="0.72"/><rect x="52.0" y="66.0" width="6.5" height="1.1" fill="#111" opacity="0.72"/><rect x="59.4" y="66.0" width="15.1" height="1.1" fill="#111" opacity="0.72"/><rect x="75.9" y="66.0" width="13.4" height="1.1" fill="#111" opacity="0.72"/><rect x="90.7" y="66.0" width="12.7" height="1.1" fill="#111" opacity="0.72"/><rect x="104.5" y="66.0" width="9.5" height="1.1" fill="#111" opacity="0.72"/></svg></div>
<div class="t" style="left:15px;top:627px;font-size:12.5px;color:#555">4</div>
<div class="a" style="left:27px;top:713px;width:124px;height:71px;overflow:hidden;background:radial-gradient(ellipse 40% 50% at 50% 52%,rgba(255,255,255,1) 0%,rgba(255,255,255,.85) 45%,rgba(255,255,255,0) 100%),linear-gradient(90deg,#fbe8c2 0%,#fcefd8 18%,#fdf4e4 45%,#fdf3e2 70%,#fdeccb 88%,#fde5b2 100%);box-shadow:0 0 1px rgba(0,0,0,.25)"><svg class="a" style="left:0;top:0" width="124" height="71" viewBox="0 0 124 71"><rect width="2" height="71" fill="#4d382b"/><path d="M2 22C5 40 10 55 16 71M6 10C5 30 6 50 13 71" stroke="#8b7664" stroke-width=".5" fill="none"/><path d="M24 30C15 40 10 55 11 71" stroke="#b9a994" stroke-width=".4" fill="none"/><path d="M0 10H17L19 12L17 14H0Z" fill="#f0a131"/><rect x="10.0" y="8.0" width="7.3" height="1.6" fill="#c0202a" opacity="0.8"/><rect x="18.5" y="8.0" width="5.0" height="1.6" fill="#c0202a" opacity="0.8"/><rect x="24.6" y="8.0" width="4.9" height="1.6" fill="#c0202a" opacity="0.8"/><rect x="30.4" y="8.0" width="7.4" height="1.6" fill="#c0202a" opacity="0.8"/><rect x="38.8" y="8.0" width="7.7" height="1.6" fill="#c0202a" opacity="0.8"/><rect x="47.9" y="8.0" width="4.4" height="1.6" fill="#c0202a" opacity="0.8"/><rect x="53.7" y="8.0" width="5.6" height="1.6" fill="#c0202a" opacity="0.8"/><rect x="60.8" y="8.0" width="12.8" height="1.6" fill="#c0202a" opacity="0.8"/><rect x="74.7" y="8.0" width="14.2" height="1.6" fill="#c0202a" opacity="0.8"/><rect x="90.3" y="8.0" width="4.9" height="1.6" fill="#c0202a" opacity="0.8"/><rect x="96.3" y="8.0" width="12.4" height="1.6" fill="#c0202a" opacity="0.8"/><rect x="110.3" y="8.0" width="3.7" height="1.6" fill="#c0202a" opacity="0.8"/><rect x="22.0" y="14.0" width="13.6" height="1.1" fill="#c0202a" opacity="0.72"/><rect x="37.1" y="14.0" width="10.9" height="1.1" fill="#c0202a" opacity="0.72"/><rect x="49.2" y="14.0" width="13.1" height="1.1" fill="#c0202a" opacity="0.72"/><rect x="63.4" y="14.0" width="13.6" height="1.1" fill="#111" opacity="0.72"/><rect x="16.0" y="17.6" width="11.7" height="1.1" fill="#c0202a" opacity="0.72"/><rect x="29.0" y="17.6" width="6.9" height="1.1" fill="#c0202a" opacity="0.72"/><rect x="37.4" y="17.6" width="8.0" height="1.1" fill="#c0202a" opacity="0.72"/><rect x="46.6" y="17.6" width="12.6" height="1.1" fill="#111" opacity="0.72"/><rect x="60.3" y="17.6" width="15.4" height="1.1" fill="#111" opacity="0.72"/><rect x="76.9" y="17.6" width="3.1" height="1.1" fill="#111" opacity="0.72"/><rect x="22.0" y="21.8" width="10.1" height="1.1" fill="#111" opacity="0.72"/><rect x="33.1" y="21.8" width="8.2" height="1.1" fill="#111" opacity="0.72"/><rect x="42.8" y="21.8" width="12.4" height="1.1" fill="#111" opacity="0.72"/><rect x="56.2" y="21.8" width="14.6" height="1.1" fill="#111" opacity="0.72"/><rect x="72.3" y="21.8" width="4.5" height="1.1" fill="#111" opacity="0.72"/><rect x="78.1" y="21.8" width="8.5" height="1.1" fill="#111" opacity="0.72"/><rect x="87.6" y="21.8" width="7.8" height="1.1" fill="#111" opacity="0.72"/><rect x="96.8" y="21.8" width="5.3" height="1.1" fill="#111" opacity="0.72"/><rect x="103.3" y="21.8" width="8.7" height="1.1" fill="#111" opacity="0.72"/><rect x="22.0" y="25.4" width="6.1" height="1.1" fill="#c0202a" opacity="0.72"/><rect x="29.2" y="25.4" width="6.3" height="1.1" fill="#c0202a" opacity="0.72"/><rect x="36.6" y="25.4" width="14.7" height="1.1" fill="#c0202a" opacity="0.72"/><rect x="52.3" y="25.4" width="13.5" height="1.1" fill="#111" opacity="0.72"/><rect x="67.1" y="25.4" width="4.3" height="1.1" fill="#111" opacity="0.72"/><rect x="72.4" y="25.4" width="10.7" height="1.1" fill="#111" opacity="0.72"/><rect x="84.6" y="25.4" width="9.0" height="1.1" fill="#111" opacity="0.72"/><rect x="95.1" y="25.4" width="14.0" height="1.1" fill="#111" opacity="0.72"/><rect x="110.6" y="25.4" width="3.4" height="1.1" fill="#111" opacity="0.72"/><rect x="12.0" y="29.0" width="9.6" height="1.1" fill="#111" opacity="0.72"/><rect x="22.9" y="29.0" width="13.7" height="1.1" fill="#111" opacity="0.72"/><rect x="37.9" y="29.0" width="6.3" height="1.1" fill="#111" opacity="0.72"/><rect x="45.3" y="29.0" width="12.9" height="1.1" fill="#111" opacity="0.72"/><rect x="59.6" y="29.0" width="11.4" height="1.1" fill="#111" opacity="0.72"/><rect x="72.6" y="29.0" width="10.6" height="1.1" fill="#111" opacity="0.72"/><rect x="84.2" y="29.0" width="8.0" height="1.1" fill="#111" opacity="0.72"/><rect x="93.1" y="29.0" width="13.7" height="1.1" fill="#111" opacity="0.72"/><rect x="108.0" y="29.0" width="6.0" height="1.1" fill="#111" opacity="0.72"/><rect x="12.0" y="32.6" width="5.8" height="1.1" fill="#111" opacity="0.72"/><rect x="19.3" y="32.6" width="7.4" height="1.1" fill="#111" opacity="0.72"/><rect x="28.0" y="32.6" width="7.5" height="1.1" fill="#111" opacity="0.72"/><rect x="37.0" y="32.6" width="11.7" height="1.1" fill="#111" opacity="0.72"/><rect x="49.7" y="32.6" width="15.5" height="1.1" fill="#111" opacity="0.72"/><rect x="66.7" y="32.6" width="8.9" height="1.1" fill="#111" opacity="0.72"/><rect x="76.8" y="32.6" width="3.2" height="1.1" fill="#111" opacity="0.72"/><rect x="22.0" y="38.1" width="13.1" height="1.1" fill="#111" opacity="0.72"/><rect x="36.3" y="38.1" width="8.6" height="1.1" fill="#111" opacity="0.72"/><rect x="46.1" y="38.1" width="7.2" height="1.1" fill="#111" opacity="0.72"/><rect x="54.4" y="38.1" width="10.3" height="1.1" fill="#111" opacity="0.72"/><rect x="66.1" y="38.1" width="13.5" height="1.1" fill="#111" opacity="0.72"/><rect x="80.9" y="38.1" width="15.5" height="1.1" fill="#111" opacity="0.72"/><rect x="97.3" y="38.1" width="15.9" height="1.1" fill="#111" opacity="0.72"/><rect x="16.0" y="41.7" width="9.8" height="1.1" fill="#111" opacity="0.72"/><rect x="27.1" y="41.7" width="15.4" height="1.1" fill="#111" opacity="0.72"/><rect x="43.7" y="41.7" width="6.9" height="1.1" fill="#111" opacity="0.72"/><rect x="51.8" y="41.7" width="15.2" height="1.1" fill="#111" opacity="0.72"/><rect x="68.4" y="41.7" width="14.7" height="1.1" fill="#111" opacity="0.72"/><rect x="84.2" y="41.7" width="12.4" height="1.1" fill="#111" opacity="0.72"/><rect x="98.1" y="41.7" width="5.5" height="1.1" fill="#111" opacity="0.72"/><rect x="105.1" y="41.7" width="8.9" height="1.1" fill="#111" opacity="0.72"/><rect x="22.0" y="47.2" width="10.5" height="1.1" fill="#111" opacity="0.72"/><rect x="33.9" y="47.2" width="9.9" height="1.1" fill="#111" opacity="0.72"/><rect x="44.8" y="47.2" width="8.4" height="1.1" fill="#111" opacity="0.72"/><rect x="54.1" y="47.2" width="5.9" height="1.1" fill="#111" opacity="0.72"/><rect x="12.0" y="50.8" width="12.5" height="1.1" fill="#111" opacity="0.72"/><rect x="26.0" y="50.8" width="6.5" height="1.1" fill="#111" opacity="0.72"/><rect x="33.5" y="50.8" width="5.6" height="1.1" fill="#111" opacity="0.72"/><rect x="40.5" y="50.8" width="10.7" height="1.1" fill="#111" opacity="0.72"/><rect x="52.6" y="50.8" width="11.9" height="1.1" fill="#111" opacity="0.72"/><rect x="65.6" y="50.8" width="7.7" height="1.1" fill="#111" opacity="0.72"/><rect x="74.8" y="50.8" width="11.1" height="1.1" fill="#111" opacity="0.72"/><rect x="86.9" y="50.8" width="7.8" height="1.1" fill="#111" opacity="0.72"/><rect x="95.7" y="50.8" width="4.3" height="1.1" fill="#111" opacity="0.72"/><rect x="12.0" y="56.3" width="12.2" height="1.1" fill="#111" opacity="0.72"/><rect x="25.5" y="56.3" width="13.2" height="1.1" fill="#111" opacity="0.72"/><rect x="39.9" y="56.3" width="13.4" height="1.1" fill="#111" opacity="0.72"/><rect x="54.2" y="56.3" width="14.3" height="1.1" fill="#111" opacity="0.72"/><rect x="70.1" y="56.3" width="9.9" height="1.1" fill="#111" opacity="0.72"/><rect x="16.0" y="61.8" width="5.3" height="1.1" fill="#111" opacity="0.72"/><rect x="22.3" y="61.8" width="6.9" height="1.1" fill="#111" opacity="0.72"/><rect x="30.6" y="61.8" width="6.5" height="1.1" fill="#111" opacity="0.72"/><rect x="38.3" y="61.8" width="14.1" height="1.1" fill="#111" opacity="0.72"/><rect x="53.4" y="61.8" width="10.7" height="1.1" fill="#111" opacity="0.72"/><rect x="65.6" y="61.8" width="7.7" height="1.1" fill="#111" opacity="0.72"/><rect x="74.2" y="61.8" width="4.9" height="1.1" fill="#111" opacity="0.72"/><rect x="80.5" y="61.8" width="8.9" height="1.1" fill="#111" opacity="0.72"/><rect x="90.5" y="61.8" width="4.4" height="1.1" fill="#111" opacity="0.72"/><rect x="96.4" y="61.8" width="3.6" height="1.1" fill="#111" opacity="0.72"/><rect x="22.0" y="65.4" width="4.2" height="1.1" fill="#111" opacity="0.72"/><rect x="27.4" y="65.4" width="8.0" height="1.1" fill="#111" opacity="0.72"/><rect x="36.6" y="65.4" width="15.1" height="1.1" fill="#111" opacity="0.72"/><rect x="52.9" y="65.4" width="6.0" height="1.1" fill="#111" opacity="0.72"/><rect x="60.0" y="65.4" width="4.1" height="1.1" fill="#111" opacity="0.72"/><rect x="65.5" y="65.4" width="10.0" height="1.1" fill="#111" opacity="0.72"/><rect x="76.7" y="65.4" width="10.3" height="1.1" fill="#111" opacity="0.72"/><rect x="88.3" y="65.4" width="11.7" height="1.1" fill="#111" opacity="0.72"/></svg></div>
<div class="t" style="left:15px;top:714px;font-size:12.5px;color:#555">5</div>
<div class="a" style="left:27px;top:800px;width:124px;height:10px;overflow:hidden;background:radial-gradient(ellipse 40% 50% at 50% 52%,rgba(255,255,255,1) 0%,rgba(255,255,255,.85) 45%,rgba(255,255,255,0) 100%),linear-gradient(90deg,#fbe8c2 0%,#fcefd8 18%,#fdf4e4 45%,#fdf3e2 70%,#fdeccb 88%,#fde5b2 100%);box-shadow:0 0 1px rgba(0,0,0,.25)"><svg class="a" style="left:0;top:0" width="124" height="71" viewBox="0 0 124 71"><rect width="2" height="71" fill="#4d382b"/><path d="M2 22C5 40 10 55 16 71M6 10C5 30 6 50 13 71" stroke="#8b7664" stroke-width=".5" fill="none"/><path d="M24 30C15 40 10 55 11 71" stroke="#b9a994" stroke-width=".4" fill="none"/><path d="M0 10H17L19 12L17 14H0Z" fill="#f0a131"/><rect x="10.0" y="8.0" width="14.7" height="1.6" fill="#c0202a" opacity="0.8"/><rect x="25.8" y="8.0" width="11.1" height="1.6" fill="#c0202a" opacity="0.8"/><rect x="38.4" y="8.0" width="6.7" height="1.6" fill="#c0202a" opacity="0.8"/><rect x="46.4" y="8.0" width="11.0" height="1.6" fill="#c0202a" opacity="0.8"/><rect x="59.0" y="8.0" width="4.4" height="1.6" fill="#c0202a" opacity="0.8"/><rect x="64.3" y="8.0" width="7.8" height="1.6" fill="#c0202a" opacity="0.8"/><rect x="73.6" y="8.0" width="14.1" height="1.6" fill="#c0202a" opacity="0.8"/><rect x="88.7" y="8.0" width="15.0" height="1.6" fill="#c0202a" opacity="0.8"/><rect x="105.0" y="8.0" width="9.0" height="1.6" fill="#c0202a" opacity="0.8"/><rect x="12.0" y="14.0" width="15.3" height="1.1" fill="#c0202a" opacity="0.72"/><rect x="28.4" y="14.0" width="9.3" height="1.1" fill="#c0202a" opacity="0.72"/><rect x="39.3" y="14.0" width="15.2" height="1.1" fill="#111" opacity="0.72"/><rect x="55.6" y="14.0" width="4.4" height="1.1" fill="#111" opacity="0.72"/><rect x="16.0" y="19.5" width="6.3" height="1.1" fill="#c0202a" opacity="0.72"/><rect x="23.6" y="19.5" width="12.8" height="1.1" fill="#c0202a" opacity="0.72"/><rect x="37.4" y="19.5" width="12.8" height="1.1" fill="#111" opacity="0.72"/><rect x="51.4" y="19.5" width="14.4" height="1.1" fill="#111" opacity="0.72"/><rect x="67.3" y="19.5" width="8.3" height="1.1" fill="#111" opacity="0.72"/><rect x="76.9" y="19.5" width="11.1" height="1.1" fill="#111" opacity="0.72"/><rect x="89.3" y="19.5" width="12.0" height="1.1" fill="#111" opacity="0.72"/><rect x="102.7" y="19.5" width="6.9" height="1.1" fill="#111" opacity="0.72"/><rect x="110.7" y="19.5" width="3.3" height="1.1" fill="#111" opacity="0.72"/><rect x="12.0" y="23.1" width="8.8" height="1.1" fill="#111" opacity="0.72"/><rect x="21.9" y="23.1" width="12.8" height="1.1" fill="#111" opacity="0.72"/><rect x="36.0" y="23.1" width="11.2" height="1.1" fill="#111" opacity="0.72"/><rect x="48.4" y="23.1" width="13.4" height="1.1" fill="#111" opacity="0.72"/><rect x="63.1" y="23.1" width="15.8" height="1.1" fill="#111" opacity="0.72"/><rect x="80.0" y="23.1" width="9.4" height="1.1" fill="#111" opacity="0.72"/><rect x="90.7" y="23.1" width="12.9" height="1.1" fill="#111" opacity="0.72"/><rect x="104.7" y="23.1" width="6.8" height="1.1" fill="#111" opacity="0.72"/><rect x="12.0" y="28.6" width="6.0" height="1.1" fill="#111" opacity="0.72"/><rect x="19.3" y="28.6" width="9.3" height="1.1" fill="#111" opacity="0.72"/><rect x="29.9" y="28.6" width="10.2" height="1.1" fill="#111" opacity="0.72"/><rect x="41.1" y="28.6" width="4.9" height="1.1" fill="#111" opacity="0.72"/><rect x="47.0" y="28.6" width="12.1" height="1.1" fill="#111" opacity="0.72"/><rect x="60.3" y="28.6" width="14.7" height="1.1" fill="#111" opacity="0.72"/><rect x="76.2" y="28.6" width="12.8" height="1.1" fill="#111" opacity="0.72"/><rect x="90.6" y="28.6" width="7.0" height="1.1" fill="#111" opacity="0.72"/><rect x="16.0" y="32.2" width="4.8" height="1.1" fill="#c0202a" opacity="0.72"/><rect x="22.3" y="32.2" width="13.2" height="1.1" fill="#c0202a" opacity="0.72"/><rect x="36.7" y="32.2" width="12.2" height="1.1" fill="#111" opacity="0.72"/><rect x="50.2" y="32.2" width="12.8" height="1.1" fill="#111" opacity="0.72"/><rect x="64.7" y="32.2" width="7.5" height="1.1" fill="#111" opacity="0.72"/><rect x="73.4" y="32.2" width="6.3" height="1.1" fill="#111" opacity="0.72"/><rect x="80.7" y="32.2" width="8.4" height="1.1" fill="#111" opacity="0.72"/><rect x="90.7" y="32.2" width="7.6" height="1.1" fill="#111" opacity="0.72"/><rect x="12.0" y="36.4" width="6.1" height="1.1" fill="#111" opacity="0.72"/><rect x="19.4" y="36.4" width="9.2" height="1.1" fill="#111" opacity="0.72"/><rect x="29.8" y="36.4" width="4.7" height="1.1" fill="#111" opacity="0.72"/><rect x="35.6" y="36.4" width="11.3" height="1.1" fill="#111" opacity="0.72"/><rect x="48.3" y="36.4" width="4.9" height="1.1" fill="#111" opacity="0.72"/><rect x="54.1" y="36.4" width="14.8" height="1.1" fill="#111" opacity="0.72"/><rect x="69.8" y="36.4" width="9.3" height="1.1" fill="#111" opacity="0.72"/><rect x="12.0" y="41.9" width="12.8" height="1.1" fill="#111" opacity="0.72"/><rect x="25.8" y="41.9" width="12.0" height="1.1" fill="#111" opacity="0.72"/><rect x="39.1" y="41.9" width="5.6" height="1.1" fill="#111" opacity="0.72"/><rect x="46.0" y="41.9" width="6.0" height="1.1" fill="#111" opacity="0.72"/><rect x="53.4" y="41.9" width="6.6" height="1.1" fill="#111" opacity="0.72"/><rect x="12.0" y="45.5" width="12.4" height="1.1" fill="#111" opacity="0.72"/><rect x="26.0" y="45.5" width="5.3" height="1.1" fill="#111" opacity="0.72"/><rect x="32.4" y="45.5" width="14.8" height="1.1" fill="#111" opacity="0.72"/><rect x="48.7" y="45.5" width="10.0" height="1.1" fill="#111" opacity="0.72"/><rect x="22.0" y="49.1" width="5.6" height="1.1" fill="#111" opacity="0.72"/><rect x="29.1" y="49.1" width="12.5" height="1.1" fill="#111" opacity="0.72"/><rect x="42.8" y="49.1" width="15.0" height="1.1" fill="#111" opacity="0.72"/><rect x="22.0" y="52.7" width="11.6" height="1.1" fill="#111" opacity="0.72"/><rect x="34.7" y="52.7" width="6.1" height="1.1" fill="#111" opacity="0.72"/><rect x="42.1" y="52.7" width="6.8" height="1.1" fill="#111" opacity="0.72"/><rect x="49.9" y="52.7" width="7.7" height="1.1" fill="#111" opacity="0.72"/><rect x="58.6" y="52.7" width="15.4" height="1.1" fill="#111" opacity="0.72"/><rect x="74.9" y="52.7" width="8.2" height="1.1" fill="#111" opacity="0.72"/><rect x="84.3" y="52.7" width="9.5" height="1.1" fill="#111" opacity="0.72"/><rect x="95.3" y="52.7" width="4.9" height="1.1" fill="#111" opacity="0.72"/><rect x="101.4" y="52.7" width="10.4" height="1.1" fill="#111" opacity="0.72"/><rect x="22.0" y="58.2" width="9.3" height="1.1" fill="#111" opacity="0.72"/><rect x="32.5" y="58.2" width="15.9" height="1.1" fill="#111" opacity="0.72"/><rect x="49.5" y="58.2" width="6.3" height="1.1" fill="#111" opacity="0.72"/><rect x="57.4" y="58.2" width="12.2" height="1.1" fill="#111" opacity="0.72"/><rect x="71.1" y="58.2" width="5.8" height="1.1" fill="#111" opacity="0.72"/><rect x="78.4" y="58.2" width="13.7" height="1.1" fill="#111" opacity="0.72"/><rect x="93.2" y="58.2" width="11.0" height="1.1" fill="#111" opacity="0.72"/><rect x="105.6" y="58.2" width="5.7" height="1.1" fill="#111" opacity="0.72"/><rect x="12.0" y="61.8" width="10.5" height="1.1" fill="#c0202a" opacity="0.72"/><rect x="24.1" y="61.8" width="11.5" height="1.1" fill="#c0202a" opacity="0.72"/><rect x="37.2" y="61.8" width="8.1" height="1.1" fill="#111" opacity="0.72"/><rect x="46.2" y="61.8" width="9.5" height="1.1" fill="#111" opacity="0.72"/><rect x="57.0" y="61.8" width="10.6" height="1.1" fill="#111" opacity="0.72"/><rect x="69.2" y="61.8" width="6.0" height="1.1" fill="#111" opacity="0.72"/><rect x="76.7" y="61.8" width="5.6" height="1.1" fill="#111" opacity="0.72"/><rect x="83.3" y="61.8" width="4.8" height="1.1" fill="#111" opacity="0.72"/><rect x="89.5" y="61.8" width="4.0" height="1.1" fill="#111" opacity="0.72"/><rect x="94.9" y="61.8" width="8.5" height="1.1" fill="#111" opacity="0.72"/><rect x="104.6" y="61.8" width="9.4" height="1.1" fill="#111" opacity="0.72"/><rect x="12.0" y="65.4" width="13.9" height="1.1" fill="#c0202a" opacity="0.72"/><rect x="27.0" y="65.4" width="13.3" height="1.1" fill="#c0202a" opacity="0.72"/><rect x="41.6" y="65.4" width="14.2" height="1.1" fill="#c0202a" opacity="0.72"/><rect x="57.0" y="65.4" width="13.5" height="1.1" fill="#111" opacity="0.72"/><rect x="72.1" y="65.4" width="6.6" height="1.1" fill="#111" opacity="0.72"/><rect x="79.7" y="65.4" width="13.7" height="1.1" fill="#111" opacity="0.72"/><rect x="94.9" y="65.4" width="5.1" height="1.1" fill="#111" opacity="0.72"/></svg></div>
<div class="t" style="left:15px;top:801px;font-size:12.5px;color:#555">6</div>
<div class="a" style="left:167px;top:352px;width:12px;height:456px;background:#dcdcdc"></div>
<div class="a" style="left:167px;top:352px;width:12px;height:12px;background:#fff;border:1px solid #c6c6c6"></div>
<svg class="a" style="left:170px;top:356px" width="7" height="4" viewBox="0 0 7 4"><path d="M0 4L3.5 0L7 4Z" fill="#555"/></svg>
<div class="a" style="left:167px;top:364px;width:12px;height:64px;background:#fff;border:1px solid #c6c6c6"></div>
<div class="a" style="left:167px;top:796px;width:12px;height:12px;background:#fff;border:1px solid #c6c6c6"></div>
<svg class="a" style="left:170px;top:801px" width="7" height="4" viewBox="0 0 7 4"><path d="M0 0L3.5 4L7 0Z" fill="#555"/></svg>
<!-- slide scrollbar -->
<div class="a" style="left:1121px;top:352px;width:12px;height:380px;background:#dcdcdc"></div>
<div class="a" style="left:1121px;top:352px;width:12px;height:11px;background:#fff;border:1px solid #c6c6c6"></div>
<svg class="a" style="left:1124px;top:356px" width="7" height="4" viewBox="0 0 7 4"><path d="M0 4L3.5 0L7 4Z" fill="#555"/></svg>
<div class="a" style="left:1121px;top:363px;width:12px;height:15px;background:#fff;border:1px solid #c6c6c6"></div>
<div class="a" style="left:1121px;top:721px;width:12px;height:11px;background:#fff;border:1px solid #c6c6c6"></div>
<svg class="a" style="left:1124px;top:725px" width="7" height="4" viewBox="0 0 7 4"><path d="M0 0L3.5 4L7 0Z" fill="#555"/></svg>
<svg class="a" style="left:1123px;top:736px" width="9" height="24" viewBox="0 0 9 24"><path d="M1 5.5L4.5 2L8 5.5Z M1 9L4.5 5.5L8 9Z" fill="#666"/><path d="M1 14.5L4.5 18L8 14.5Z M1 18L4.5 21.5L8 18Z" fill="#666"/></svg>
<!-- notes -->
<div class="a" style="left:183px;top:778px;width:951px;height:1px;background:#cfcfcf"></div>
<div class="t" style="left:193px;top:786px;font-size:12px;color:#5a5a5a">Заметки к слайду</div>
<!-- status bar -->
<div class="a" style="left:5px;top:810px;width:1129px;height:18px;background:#f1f1f1;border-top:1px solid #dadada"></div>
<div class="t" style="left:11px;top:814px;font-size:9px;color:#555">Слайд 1 из 35</div>
<svg class="a" style="left:86px;top:812px" width="12" height="12" viewBox="0 0 12 12"><path d="M1 1.5C3 0.5 5 0.5 6 2C7 0.5 9 0.5 11 1.5V10C9 9 7 9 6 10.5C5 9 3 9 1 10Z M6 2V10.5" stroke="#666" stroke-width=".9" fill="none"/><path d="M8 5L11 8M11 5L8 8" stroke="#666" stroke-width=".9"/></svg>
<div class="t" style="left:111px;top:814px;font-size:9.4px;color:#555">английский (США)</div>
<svg class="a" style="left:692px;top:812px" width="11" height="12" viewBox="0 0 11 12"><path d="M5.5 0.5L3 3H8Z" fill="#777"/><path d="M0 5.5H11M2 8H9M0 10.5H11" stroke="#777" stroke-width="1"/></svg>
<div class="t" style="left:706px;top:814px;font-size:9.5px;color:#555">Заметки</div>
<svg class="a" style="left:759px;top:812px" width="11" height="12" viewBox="0 0 11 12"><path d="M0.5 0.5H10.5V8H4L2 11V8H0.5Z" fill="#777"/></svg>
<div class="t" style="left:773px;top:814px;font-size:9.6px;color:#555">Примечания</div>
<div class="a" style="left:846px;top:811px;width:31px;height:17px;background:#d6d6d6"></div>
<svg class="a" style="left:855px;top:813px" width="12" height="11" viewBox="0 0 12 11"><rect x="0.5" y="0.5" width="11" height="10" stroke="#666" fill="none"/><rect x="3.5" y="2.5" width="6" height="3" stroke="#666" fill="none"/><path d="M3 8H10" stroke="#666"/></svg>
<svg class="a" style="left:886px;top:813px" width="12" height="11" viewBox="0 0 12 11"><rect x="0.5" y="0.5" width="4.5" height="3.5" stroke="#666" fill="none"/><rect x="7" y="0.5" width="4.5" height="3.5" stroke="#666" fill="none"/><rect x="0.5" y="6.5" width="4.5" height="3.5" stroke="#666" fill="none"/><rect x="7" y="6.5" width="4.5" height="3.5" stroke="#666" fill="none"/></svg>
<svg class="a" style="left:917px;top:812px" width="13" height="12" viewBox="0 0 13 12"><path d="M1 1.5H5.5L6.5 2.5L7.5 1.5H12V10H7.5L6.5 11L5.5 10H1Z M6.5 2.5V11M2.5 4H5M2.5 6H5M8 4H10.5M8 6H10.5" stroke="#666" stroke-width=".9" fill="none"/></svg>
<svg class="a" style="left:948px;top:812px" width="13" height="12" viewBox="0 0 13 12"><path d="M0.5 1H12.5M1.5 1V7.5H11.5V1M6.5 7.5V10M4 11.5L6.5 10L9 11.5" stroke="#666" stroke-width=".9" fill="none"/><rect x="3.5" y="3" width="6" height="2.5" fill="#999"/></svg>
<div class="a" style="left:975px;top:818px;width:6px;height:2px;background:#555"></div>
<div class="a" style="left:984px;top:818px;width:82px;height:1px;background:#a8a8a8"></div>
<div class="a" style="left:1025px;top:816px;width:1px;height:5px;background:#a8a8a8"></div>
<div class="a" style="left:1010px;top:813px;width:3px;height:11px;background:#555"></div>
<div class="a" style="left:1069px;top:818px;width:8px;height:2px;background:#555"></div>
<div class="a" style="left:1072px;top:815px;width:2px;height:8px;background:#555"></div>
<div class="t" style="left:1089px;top:814px;font-size:9.3px;color:#555">69%</div>
<svg class="a" style="left:1116px;top:813px" width="12" height="12" viewBox="0 0 12 12"><rect x="0.5" y="0.5" width="11" height="11" stroke="#666" fill="none"/><path d="M2 6H5M7 6H10M6 2V5M6 7V10" stroke="#666" stroke-width=".8"/></svg>
<div class="a" style="left:0;top:0;width:1885px;height:970px;transform:translate(27px,365px) scale(0.17033) translate(-289px,-357px);transform-origin:0 0"><!-- SLIDE -->
<div class="a" style="left:289px;top:357px;width:728px;height:411px;background:radial-gradient(ellipse 40% 50% at 50% 52%,rgba(255,255,255,1) 0%,rgba(255,255,255,.85) 45%,rgba(255,255,255,0) 100%),linear-gradient(90deg,#fbe8c2 0%,#fcefd8 18%,#fdf4e4 45%,#fdf3e2 70%,#fdeccb 88%,#fde5b2 100%);box-shadow:0 0 2px rgba(0,0,0,.15)"></div>
<svg class="a" style="left:289px;top:357px" width="728" height="411" viewBox="0 0 728 411">
 <rect x="0" y="0" width="10.5" height="411" fill="#4d382b"/>
 <g fill="none" stroke-linecap="round">
  <path d="M166 88C120 140 80 200 58 262" stroke="#d8ccb0" stroke-width="1.2"/>
  <path d="M12 150C14 200 22 240 30 262" stroke="#d8ccb0" stroke-width="1"/>
  <path d="M10 200C14 250 22 290 30 320C40 360 52 390 63 411" stroke="#d6cab0" stroke-width="2.4"/>
  <path d="M45 306C55 340 66 380 78 411" stroke="#dcd0b8" stroke-width="1.5"/>
  <path d="M10 133C18 190 28 250 38 306S62 385 73 411" stroke="#4a3527" stroke-width="2"/>
  <path d="M38 78C33 150 30 220 32 260C34 280 38 295 44 306S70 380 85 411" stroke="#4a3527" stroke-width="1.9"/>
  <path d="M143 188C115 215 90 250 72 290C60 320 56 350 60 380C62 395 64 405 66 411" stroke="#4a3527" stroke-width="1.3"/>
 </g>
 <path d="M0 259H84L104.5 282L84 305H0Z" fill="#f0a131"/>
</svg>
<div class="wv" style="left:565px;top:404px;width:90px"></div><div class="wv" style="left:664px;top:404px;width:36px"></div><div class="wv" style="left:764px;top:404px;width:62px"></div><div class="wv" style="left:843px;top:404px;width:49px"></div><div class="wv" style="left:359px;top:433.5px;width:101px"></div><div class="wv" style="left:490px;top:433.5px;width:148px"></div><div class="wv" style="left:720px;top:433.5px;width:172px"></div><div class="wv" style="left:358px;top:488.5px;width:73px"></div><div class="wv" style="left:438px;top:488.5px;width:74px"></div><div class="wv" style="left:522px;top:488.5px;width:28px"></div><div class="wv" style="left:557px;top:488.5px;width:99px"></div><div class="wv" style="left:693px;top:488.5px;width:123px"></div><div class="wv" style="left:356px;top:513px;width:89px"></div><div class="wv" style="left:577px;top:513px;width:132px"></div><div class="wv" style="left:531px;top:654px;width:61px"></div>
<div class="a" style="left:795.9px;top:579.5px;width:114.1px;height:2px;background:#0a0a0a"></div><div class="a" style="left:460.6px;top:603px;width:449.4px;height:2px;background:#0a0a0a"></div><div class="a" style="left:783.5px;top:626px;width:122.5px;height:2px;background:#0a0a0a"></div><div class="a" style="left:715.5px;top:682.5px;width:194.5px;height:1.5px;background:#a8192e"></div>
<div class="t" style="left:358.4px;top:383.50px;font-size:24px;font-weight:bold;font-style:italic;-webkit-text-stroke:.35px #c00a1e;color:#c00a1e;transform:scale(0.9054,1);transform-origin:0 20.00px">ТЕМА:</div>
<div class="t" style="left:436.3px;top:383.50px;font-size:24px;font-weight:bold;font-style:italic;-webkit-text-stroke:.35px #c00a1e;color:#c00a1e;transform:scale(0.9623,1);transform-origin:0 20.00px">«Туризм</div>
<div class="t" style="left:543.7px;top:383.50px;font-size:24px;font-weight:bold;font-style:italic;-webkit-text-stroke:.35px #c00a1e;color:#c00a1e;transform:scale(0.7793,1);transform-origin:0 20.00px">в</div>
<div class="t" style="left:565.8px;top:383.50px;font-size:24px;font-weight:bold;font-style:italic;-webkit-text-stroke:.35px #c00a1e;color:#c00a1e;transform:scale(1.0685,1);transform-origin:0 20.00px">Україні</div>
<div class="t" style="left:664.3px;top:383.50px;font-size:24px;font-weight:bold;font-style:italic;-webkit-text-stroke:.35px #c00a1e;color:#c00a1e;transform:scale(0.9925,1);transform-origin:0 20.00px">під</div>
<div class="t" style="left:710.4px;top:383.50px;font-size:24px;font-weight:bold;font-style:italic;-webkit-text-stroke:.35px #c00a1e;color:#c00a1e;transform:scale(1.0372,1);transform-origin:0 20.00px">час</div>
<div class="t" style="left:764.5px;top:383.50px;font-size:24px;font-weight:bold;font-style:italic;-webkit-text-stroke:.35px #c00a1e;color:#c00a1e;transform:scale(0.8454,1);transform-origin:0 20.00px">війни:</div>
<div class="t" style="left:843.5px;top:383.50px;font-size:24px;font-weight:bold;font-style:italic;-webkit-text-stroke:.35px #c00a1e;color:#c00a1e;transform:scale(0.9696,1);transform-origin:0 20.00px">нові</div>
<div class="t" style="left:359px;top:412.80px;font-size:24px;font-weight:bold;font-style:italic;-webkit-text-stroke:.35px #c00a1e;color:#c00a1e;transform:scale(0.9590,1);transform-origin:0 20.00px">виклики,</div>
<div class="t" style="left:490px;top:412.80px;font-size:24px;font-weight:bold;font-style:italic;-webkit-text-stroke:.35px #c00a1e;color:#c00a1e;transform:scale(0.9867,1);transform-origin:0 20.00px">можливості</div>
<div class="t" style="left:664.3px;top:412.80px;font-size:24px;font-weight:bold;font-style:italic;-webkit-text-stroke:.35px #c00a1e;color:#c00a1e;transform:scale(0.7986,1);transform-origin:0 20.00px">та</div>
<div class="t" style="left:720px;top:412.80px;font-size:24px;font-weight:bold;font-style:italic;-webkit-text-stroke:.35px #c00a1e;color:#c00a1e;transform:scale(0.9862,1);transform-origin:0 20.00px">перспективи»</div>
<div class="t" style="left:359px;top:471.80px;font-size:19.5px;font-style:italic;color:#463c33;font-family:'Liberation Serif';transform:scale(1.0880,1);transform-origin:0 16.00px">Основні</div>
<div class="t" style="left:438px;top:471.80px;font-size:19.5px;font-style:italic;color:#463c33;font-family:'Liberation Serif';transform:scale(1.0402,1);transform-origin:0 16.00px">чинники,</div>
<div class="t" style="left:522.5px;top:471.80px;font-size:19.5px;font-style:italic;color:#463c33;font-family:'Liberation Serif';transform:scale(1.1478,1);transform-origin:0 16.00px">які</div>
<div class="t" style="left:557.2px;top:471.80px;font-size:19.5px;font-style:italic;color:#463c33;font-family:'Liberation Serif';transform:scale(1.0771,1);transform-origin:0 16.00px">впливають</div>
<div class="t" style="left:665px;top:471.80px;font-size:19.5px;font-style:italic;color:#463c33;font-family:'Liberation Serif'">на</div>
<div class="t" style="left:693px;top:471.80px;font-size:19.5px;font-style:italic;color:#463c33;font-family:'Liberation Serif';transform:scale(1.1088,1);transform-origin:0 16.00px">туристський</div>
<div class="t" style="left:821.9px;top:471.80px;font-size:19.5px;font-style:italic;color:#463c33;font-family:'Liberation Serif';transform:scale(1.0604,1);transform-origin:0 16.00px">попит</div>
<div class="t" style="left:886.9px;top:471.80px;font-size:19.5px;font-style:italic;color:#463c33;font-family:'Liberation Serif';transform:scale(0.9960,1);transform-origin:0 16.00px">і</div>
<div class="t" style="left:356.9px;top:496.40px;font-size:19.5px;font-style:italic;color:#463c33;font-family:'Liberation Serif';transform:scale(1.1239,1);transform-origin:0 16.00px">розвиток</div>
<div class="t" style="left:576.7px;top:496.40px;font-size:19.5px;font-style:italic;color:#463c33;font-family:'Liberation Serif';transform:scale(1.0951,1);transform-origin:0 16.00px">туристичного</div>
<div class="t" style="left:839.2px;top:496.40px;font-size:19.5px;font-style:italic;color:#463c33;font-family:'Liberation Serif';transform:scale(1.1309,1);transform-origin:0 16.00px">ринку</div>
<div class="t" style="left:579.4px;top:559.20px;font-size:22px;font-weight:bold;color:#c00a1e;transform:scale(0.9664,1);transform-origin:0 18.00px">Доповідач – доцент</div>
<div class="t" style="left:795.9px;top:559.20px;font-size:22px;font-weight:bold;color:#0a0a0a;transform:scale(1.1963,1);transform-origin:0 18.00px">кафедри</div>
<div class="t" style="left:460.6px;top:582.50px;font-size:22px;font-weight:bold;color:#0a0a0a;transform:scale(1.1231,1);transform-origin:0 18.00px">підприємництва торгівлі та біржової</div>
<div class="t" style="left:783.5px;top:605.40px;font-size:22px;font-weight:bold;color:#0a0a0a;transform:scale(1.0562,1);transform-origin:0 18.00px">діяльності</div>
<div class="t" style="left:906.5px;top:617.00px;font-size:10px;color:#0a0a0a;transform:scale(1.0787,1);transform-origin:0 8.00px">,</div>
<div class="t" style="left:531px;top:635.00px;font-size:22.5px;font-weight:bold;color:#5a4327;transform:scale(1.0815,1);transform-origin:0 18.00px">к.е.н.</div>
<div class="t" style="left:601.6px;top:635.00px;font-size:22.5px;font-weight:bold;color:#5a4327;transform:scale(1.0886,1);transform-origin:0 18.00px">Ханенко Алла Валеріївна</div>
<div class="t" style="left:715.5px;top:666.50px;font-size:17px;color:#a8192e;transform:scale(1.1544,1);transform-origin:0 14.00px">allakhanenko@ukr.net</div>
<div class="t" style="left:825.6px;top:691.50px;font-size:14px;font-weight:bold;color:#b0101e;letter-spacing:0.5px;transform:scale(1.0184,1);transform-origin:0 12.00px">0966975195</div>
</div><!-- SLIDE -->
<div class="a" style="left:289px;top:357px;width:728px;height:411px;background:radial-gradient(ellipse 40% 50% at 50% 52%,rgba(255,255,255,1) 0%,rgba(255,255,255,.85) 45%,rgba(255,255,255,0) 100%),linear-gradient(90deg,#fbe8c2 0%,#fcefd8 18%,#fdf4e4 45%,#fdf3e2 70%,#fdeccb 88%,#fde5b2 100%);box-shadow:0 0 2px rgba(0,0,0,.15)"></div>
<svg class="a" style="left:289px;top:357px" width="728" height="411" viewBox="0 0 728 411">
 <rect x="0" y="0" width="10.5" height="411" fill="#4d382b"/>
 <g fill="none" stroke-linecap="round">
  <path d="M166 88C120 140 80 200 58 262" stroke="#d8ccb0" stroke-width="1.2"/>
  <path d="M12 150C14 200 22 240 30 262" stroke="#d8ccb0" stroke-width="1"/>
  <path d="M10 200C14 250 22 290 30 320C40 360 52 390 63 411" stroke="#d6cab0" stroke-width="2.4"/>
  <path d="M45 306C55 340 66 380 78 411" stroke="#dcd0b8" stroke-width="1.5"/>
  <path d="M10 133C18 190 28 250 38 306S62 385 73 411" stroke="#4a3527" stroke-width="2"/>
  <path d="M38 78C33 150 30 220 32 260C34 280 38 295 44 306S70 380 85 411" stroke="#4a3527" stroke-width="1.9"/>
  <path d="M143 188C115 215 90 250 72 290C60 320 56 350 60 380C62 395 64 405 66 411" stroke="#4a3527" stroke-width="1.3"/>
 </g>
 <path d="M0 259H84L104.5 282L84 305H0Z" fill="#f0a131"/>
</svg>
<div class="wv" style="left:565px;top:404px;width:90px"></div><div class="wv" style="left:664px;top:404px;width:36px"></div><div class="wv" style="left:764px;top:404px;width:62px"></div><div class="wv" style="left:843px;top:404px;width:49px"></div><div class="wv" style="left:359px;top:433.5px;width:101px"></div><div class="wv" style="left:490px;top:433.5px;width:148px"></div><div class="wv" style="left:720px;top:433.5px;width:172px"></div><div class="wv" style="left:358px;top:488.5px;width:73px"></div><div class="wv" style="left:438px;top:488.5px;width:74px"></div><div class="wv" style="left:522px;top:488.5px;width:28px"></div><div class="wv" style="left:557px;top:488.5px;width:99px"></div><div class="wv" style="left:693px;top:488.5px;width:123px"></div><div class="wv" style="left:356px;top:513px;width:89px"></div><div class="wv" style="left:577px;top:513px;width:132px"></div><div class="wv" style="left:531px;top:654px;width:61px"></div>
<div class="a" style="left:795.9px;top:579.5px;width:114.1px;height:2px;background:#0a0a0a"></div><div class="a" style="left:460.6px;top:603px;width:449.4px;height:2px;background:#0a0a0a"></div><div class="a" style="left:783.5px;top:626px;width:122.5px;height:2px;background:#0a0a0a"></div><div class="a" style="left:715.5px;top:682.5px;width:194.5px;height:1.5px;background:#a8192e"></div>
<div class="t" style="left:358.4px;top:383.50px;font-size:24px;font-weight:bold;font-style:italic;-webkit-text-stroke:.35px #c00a1e;color:#c00a1e;transform:scale(0.9054,1);transform-origin:0 20.00px">ТЕМА:</div>
<div class="t" style="left:436.3px;top:383.50px;font-size:24px;font-weight:bold;font-style:italic;-webkit-text-stroke:.35px #c00a1e;color:#c00a1e;transform:scale(0.9623,1);transform-origin:0 20.00px">«Туризм</div>
<div class="t" style="left:543.7px;top:383.50px;font-size:24px;font-weight:bold;font-style:italic;-webkit-text-stroke:.35px #c00a1e;color:#c00a1e;transform:scale(0.7793,1);transform-origin:0 20.00px">в</div>
<div class="t" style="left:565.8px;top:383.50px;font-size:24px;font-weight:bold;font-style:italic;-webkit-text-stroke:.35px #c00a1e;color:#c00a1e;transform:scale(1.0685,1);transform-origin:0 20.00px">Україні</div>
<div class="t" style="left:664.3px;top:383.50px;font-size:24px;font-weight:bold;font-style:italic;-webkit-text-stroke:.35px #c00a1e;color:#c00a1e;transform:scale(0.9925,1);transform-origin:0 20.00px">під</div>
<div class="t" style="left:710.4px;top:383.50px;font-size:24px;font-weight:bold;font-style:italic;-webkit-text-stroke:.35px #c00a1e;color:#c00a1e;transform:scale(1.0372,1);transform-origin:0 20.00px">час</div>
<div class="t" style="left:764.5px;top:383.50px;font-size:24px;font-weight:bold;font-style:italic;-webkit-text-stroke:.35px #c00a1e;color:#c00a1e;transform:scale(0.8454,1);transform-origin:0 20.00px">війни:</div>
<div class="t" style="left:843.5px;top:383.50px;font-size:24px;font-weight:bold;font-style:italic;-webkit-text-stroke:.35px #c00a1e;color:#c00a1e;transform:scale(0.9696,1);transform-origin:0 20.00px">нові</div>
<div class="t" style="left:359px;top:412.80px;font-size:24px;font-weight:bold;font-style:italic;-webkit-text-stroke:.35px #c00a1e;color:#c00a1e;transform:scale(0.9590,1);transform-origin:0 20.00px">виклики,</div>
<div class="t" style="left:490px;top:412.80px;font-size:24px;font-weight:bold;font-style:italic;-webkit-text-stroke:.35px #c00a1e;color:#c00a1e;transform:scale(0.9867,1);transform-origin:0 20.00px">можливості</div>
<div class="t" style="left:664.3px;top:412.80px;font-size:24px;font-weight:bold;font-style:italic;-webkit-text-stroke:.35px #c00a1e;color:#c00a1e;transform:scale(0.7986,1);transform-origin:0 20.00px">та</div>
<div class="t" style="left:720px;top:412.80px;font-size:24px;font-weight:bold;font-style:italic;-webkit-text-stroke:.35px #c00a1e;color:#c00a1e;transform:scale(0.9862,1);transform-origin:0 20.00px">перспективи»</div>
<div class="t" style="left:359px;top:471.80px;font-size:19.5px;font-style:italic;color:#463c33;font-family:'Liberation Serif';transform:scale(1.0880,1);transform-origin:0 16.00px">Основні</div>
<div class="t" style="left:438px;top:471.80px;font-size:19.5px;font-style:italic;color:#463c33;font-family:'Liberation Serif';transform:scale(1.0402,1);transform-origin:0 16.00px">чинники,</div>
<div class="t" style="left:522.5px;top:471.80px;font-size:19.5px;font-style:italic;color:#463c33;font-family:'Liberation Serif';transform:scale(1.1478,1);transform-origin:0 16.00px">які</div>
<div class="t" style="left:557.2px;top:471.80px;font-size:19.5px;font-style:italic;color:#463c33;font-family:'Liberation Serif';transform:scale(1.0771,1);transform-origin:0 16.00px">впливають</div>
<div class="t" style="left:665px;top:471.80px;font-size:19.5px;font-style:italic;color:#463c33;font-family:'Liberation Serif'">на</div>
<div class="t" style="left:693px;top:471.80px;font-size:19.5px;font-style:italic;color:#463c33;font-family:'Liberation Serif';transform:scale(1.1088,1);transform-origin:0 16.00px">туристський</div>
<div class="t" style="left:821.9px;top:471.80px;font-size:19.5px;font-style:italic;color:#463c33;font-family:'Liberation Serif';transform:scale(1.0604,1);transform-origin:0 16.00px">попит</div>
<div class="t" style="left:886.9px;top:471.80px;font-size:19.5px;font-style:italic;color:#463c33;font-family:'Liberation Serif';transform:scale(0.9960,1);transform-origin:0 16.00px">і</div>
<div class="t" style="left:356.9px;top:496.40px;font-size:19.5px;font-style:italic;color:#463c33;font-family:'Liberation Serif';transform:scale(1.1239,1);transform-origin:0 16.00px">розвиток</div>
<div class="t" style="left:576.7px;top:496.40px;font-size:19.5px;font-style:italic;color:#463c33;font-family:'Liberation Serif';transform:scale(1.0951,1);transform-origin:0 16.00px">туристичного</div>
<div class="t" style="left:839.2px;top:496.40px;font-size:19.5px;font-style:italic;color:#463c33;font-family:'Liberation Serif';transform:scale(1.1309,1);transform-origin:0 16.00px">ринку</div>
<div class="t" style="left:579.4px;top:559.20px;font-size:22px;font-weight:bold;color:#c00a1e;transform:scale(0.9664,1);transform-origin:0 18.00px">Доповідач – доцент</div>
<div class="t" style="left:795.9px;top:559.20px;font-size:22px;font-weight:bold;color:#0a0a0a;transform:scale(1.1963,1);transform-origin:0 18.00px">кафедри</div>
<div class="t" style="left:460.6px;top:582.50px;font-size:22px;font-weight:bold;color:#0a0a0a;transform:scale(1.1231,1);transform-origin:0 18.00px">підприємництва торгівлі та біржової</div>
<div class="t" style="left:783.5px;top:605.40px;font-size:22px;font-weight:bold;color:#0a0a0a;transform:scale(1.0562,1);transform-origin:0 18.00px">діяльності</div>
<div class="t" style="left:906.5px;top:617.00px;font-size:10px;color:#0a0a0a;transform:scale(1.0787,1);transform-origin:0 8.00px">,</div>
<div class="t" style="left:531px;top:635.00px;font-size:22.5px;font-weight:bold;color:#5a4327;transform:scale(1.0815,1);transform-origin:0 18.00px">к.е.н.</div>
<div class="t" style="left:601.6px;top:635.00px;font-size:22.5px;font-weight:bold;color:#5a4327;transform:scale(1.0886,1);transform-origin:0 18.00px">Ханенко Алла Валеріївна</div>
<div class="t" style="left:715.5px;top:666.50px;font-size:17px;color:#a8192e;transform:scale(1.1544,1);transform-origin:0 14.00px">allakhanenko@ukr.net</div>
<div class="t" style="left:825.6px;top:691.50px;font-size:14px;font-weight:bold;color:#b0101e;letter-spacing:0.5px;transform:scale(1.0184,1);transform-origin:0 12.00px">0966975195</div>
<!--CURSOR--><svg class="a" style="left:341px;top:362px" width="11" height="17" viewBox="0 0 11 17"><path d="M0.5 0.5V14L3.8 10.8L6.2 16L8.2 15.1L5.9 10H10Z" fill="#fff" stroke="#222" stroke-width="1"/></svg>
<!--/SLIDE-->

<!-- splitter -->
<div class="a" style="left:1138px;top:514px;width:1px;height:26px;background:#ccc"></div>
<div class="a" style="left:1141px;top:514px;width:1px;height:26px;background:#ccc"></div>

<!-- GALLERY -->
<div class="a" style="left:1151px;top:211px;width:184px;height:107px;background:#232323"></div>
<div class="a" style="left:1151px;top:211px;width:184px;height:4px;background:#e3ef80"></div><div class="a" style="left:1151px;top:314px;width:184px;height:4px;background:#e6ef86"></div>
<div class="a" style="left:1151px;top:211px;width:4px;height:107px;background:linear-gradient(180deg,#e3ef80,#b8e45a 35%,#7fd23a 50%,#b8e45a 65%,#e6ef86)"></div><div class="a" style="left:1331px;top:211px;width:4px;height:107px;background:linear-gradient(180deg,#e3ef80,#b8e45a 35%,#7fd23a 50%,#b8e45a 65%,#e6ef86)"></div>
<svg class="a" style="left:1177px;top:215px" width="132" height="99" viewBox="0 0 132 99"><defs><filter id="blv"><feGaussianBlur stdDeviation="1.1"/></filter><clipPath id="cpv"><rect width="132" height="99"/></clipPath></defs><g clip-path="url(#cpv)"><g filter="url(#blv)"><rect x="-5" y="-5" width="142" height="110" fill="#ebebe8"/><rect x="-5" y="-5" width="55" height="80" fill="#a47a4c"/><rect x="8" y="-2" width="22" height="27" fill="#e2e8e8"/><rect x="7" y="27" width="22" height="16" fill="#e6eaea"/><rect x="-5" y="58" width="50" height="20" fill="#7a6650"/><rect x="112" y="-5" width="22" height="82" fill="#244a36"/><rect x="112" y="77" width="22" height="25" fill="#d8d8d8"/><path d="M30 78C26 44 32 16 52 12C62 10 70 12 76 18L58 30L50 78Z" fill="#4e3e32"/><path d="M72 16C84 22 90 40 88 72L74 76Z" fill="#b4a48c"/><path d="M34 60C30 70 36 78 44 80L50 60Z" fill="#c2ae90"/><ellipse cx="66" cy="46" rx="17" ry="25" fill="#dcb6a0"/><path d="M56 62Q64 66 70 62" stroke="#a04848" stroke-width="2.5" fill="none"/><path d="M-5 104L2 70L36 62L60 74L86 66L112 76L118 104Z" fill="#d2d2d6"/><path d="M40 26C48 14 66 10 80 18" stroke="#2a2220" stroke-width="4" fill="none"/><circle cx="42" cy="26" r="3.2" fill="#e8e8e8"/><circle cx="50" cy="17" r="3" fill="#6a1a2a"/><circle cx="58" cy="14" r="2.8" fill="#dcdcdc"/><circle cx="67" cy="13" r="3" fill="#7a1c2a"/><circle cx="76" cy="16" r="2.6" fill="#c8c8c8"/></g></g></svg>
<div class="lbl" style="left:1155px;top:295px;bottom:auto;background:rgba(20,20,20,.74)">allakhanenko@ukr.net</div>
<div class="tile" style="left:1337px;top:215px"><div class="av" style="background:#e94580">C</div><div class="lbl m"><svg class="mic" viewBox="0 0 13 14"><rect x="2.8" y="0.6" width="6.2" height="10.6" rx="3.1" fill="#ee5868"/><rect x="3.6" y="11.8" width="4.8" height="1.7" fill="#ee5868"/><path d="M0.2 13.6L12.6 0.4" stroke="#2a2020" stroke-width="2.4"/><path d="M0.2 13.6L12.6 0.4" stroke="#e7848c" stroke-width="1.2"/></svg>Светлана Лоза</div></div>
<div class="tile" style="left:1519px;top:215px"><div class="cn">Валентина  Круг...</div><div class="lbl">Валентина Круглікова</div></div>
<div class="tile" style="left:1701px;top:215px"><svg class="a" style="left:48px;top:9px" width="80" height="80" viewBox="0 0 80 80"><defs><filter id="bloleks" x="-10%" y="-10%" width="120%" height="120%"><feGaussianBlur stdDeviation="1.3"/></filter><clipPath id="cpoleks"><rect width="80" height="80"/></clipPath></defs><g clip-path="url(#cpoleks)"><g filter="url(#bloleks)"><rect x="-5" y="-5" width="90" height="90" fill="#86b04e"/><circle cx="10" cy="15" r="9" fill="#b9d68c"/><circle cx="70" cy="10" r="10" fill="#cfe3b0"/><circle cx="8" cy="55" r="8" fill="#a8c878"/><circle cx="74" cy="45" r="7" fill="#a0c070"/><circle cx="15" cy="35" r="6" fill="#6a9a3a"/><ellipse cx="43" cy="16" rx="21" ry="14" fill="#8a8478"/><ellipse cx="43" cy="35" rx="19" ry="25" fill="#d9a48c"/><path d="M32 50Q43 58 54 50" stroke="#b07060" stroke-width="2" fill="none"/><path d="M30 56L58 56L56 70L32 70Z" fill="#e8eef2"/><path d="M-5 85L0 68L30 58L42 80L58 58L80 66L85 85Z" fill="#1c2448"/></g></g></svg><div class="lbl m"><svg class="mic" viewBox="0 0 13 14"><rect x="2.8" y="0.6" width="6.2" height="10.6" rx="3.1" fill="#ee5868"/><rect x="3.6" y="11.8" width="4.8" height="1.7" fill="#ee5868"/><path d="M0.2 13.6L12.6 0.4" stroke="#2a2020" stroke-width="2.4"/><path d="M0.2 13.6L12.6 0.4" stroke="#e7848c" stroke-width="1.2"/></svg>Oleksandr Perekhozhuk ...</div></div>
<div class="tile" style="left:1155px;top:320px"><div class="av" style="background:#5b6bc9">Н</div><div class="lbl">Наталья Левченко</div></div>
<div class="a" style="left:1211px;top:419px;width:64px;height:4px;background:#f2ee8a"></div>
<div class="tile" style="left:1337px;top:320px"><svg class="a" style="left:48px;top:9px" width="80" height="80" viewBox="0 0 80 80"><defs><filter id="blalina" x="-10%" y="-10%" width="120%" height="120%"><feGaussianBlur stdDeviation="1.3"/></filter><clipPath id="cpalina"><rect width="80" height="80"/></clipPath></defs><g clip-path="url(#cpalina)"><g filter="url(#blalina)"><rect x="-5" y="-5" width="90" height="90" fill="#b4a6b6"/><rect x="1" y="21" width="26" height="60" fill="#d8d4d8"/><rect x="4" y="25" width="2" height="50" fill="#444"/><path d="M31 22C30 4 60 2 64 22L70 44L78 62L40 62Z" fill="#3c2a24"/><ellipse cx="45" cy="23" rx="9" ry="12" fill="#d8a898"/><path d="M20 82L24 48L46 38L70 46L80 82Z" fill="#e8dcc6"/><ellipse cx="31" cy="56" rx="20" ry="10" fill="#7a1820"/><circle cx="24" cy="52" r="5" fill="#8e2028"/><circle cx="40" cy="55" r="5" fill="#661418"/><path d="M24 66L36 80M30 66L34 80" stroke="#4a5a3a" stroke-width="3"/></g></g></svg><div class="lbl m"><svg class="mic" viewBox="0 0 13 14"><rect x="2.8" y="0.6" width="6.2" height="10.6" rx="3.1" fill="#ee5868"/><rect x="3.6" y="11.8" width="4.8" height="1.7" fill="#ee5868"/><path d="M0.2 13.6L12.6 0.4" stroke="#2a2020" stroke-width="2.4"/><path d="M0.2 13.6L12.6 0.4" stroke="#e7848c" stroke-width="1.2"/></svg>Алина Антонова БАД-413</div></div>
<div class="tile" style="left:1519px;top:320px"><div class="av" style="background:#0e8ad6">A</div><div class="lbl m"><svg class="mic" viewBox="0 0 13 14"><rect x="2.8" y="0.6" width="6.2" height="10.6" rx="3.1" fill="#ee5868"/><rect x="3.6" y="11.8" width="4.8" height="1.7" fill="#ee5868"/><path d="M0.2 13.6L12.6 0.4" stroke="#2a2020" stroke-width="2.4"/><path d="M0.2 13.6L12.6 0.4" stroke="#e7848c" stroke-width="1.2"/></svg>Алла Ткаченко</div></div>
<div class="tile" style="left:1701px;top:320px"><div class="cn">Трилевич Настя</div><div class="lbl m"><svg class="mic" viewBox="0 0 13 14"><rect x="2.8" y="0.6" width="6.2" height="10.6" rx="3.1" fill="#ee5868"/><rect x="3.6" y="11.8" width="4.8" height="1.7" fill="#ee5868"/><path d="M0.2 13.6L12.6 0.4" stroke="#2a2020" stroke-width="2.4"/><path d="M0.2 13.6L12.6 0.4" stroke="#e7848c" stroke-width="1.2"/></svg>Трилевич Настя</div></div>
<div class="tile" style="left:1155px;top:425px"><div class="cn">Кирилл  Витков...</div><div class="lbl m"><svg class="mic" viewBox="0 0 13 14"><rect x="2.8" y="0.6" width="6.2" height="10.6" rx="3.1" fill="#ee5868"/><rect x="3.6" y="11.8" width="4.8" height="1.7" fill="#ee5868"/><path d="M0.2 13.6L12.6 0.4" stroke="#2a2020" stroke-width="2.4"/><path d="M0.2 13.6L12.6 0.4" stroke="#e7848c" stroke-width="1.2"/></svg>Кирилл Витковский</div></div>
<div class="tile" style="left:1337px;top:425px"><svg class="a" style="left:48px;top:9px" width="80" height="80" viewBox="0 0 80 80"><defs><filter id="blirina" x="-10%" y="-10%" width="120%" height="120%"><feGaussianBlur stdDeviation="1.3"/></filter><clipPath id="cpirina"><rect width="80" height="80"/></clipPath></defs><g clip-path="url(#cpirina)"><g filter="url(#blirina)"><rect x="-5" y="-5" width="90" height="90" fill="#a8a49c"/><rect x="-5" y="40" width="90" height="45" fill="#b8b4ac"/><path d="M13 5H32V50H13Z" fill="#3a3c48"/><rect x="58" y="-2" width="16" height="20" fill="#2a3028" stroke="#eee" stroke-width="2"/><ellipse cx="75" cy="50" rx="7" ry="10" fill="#6a7a4a"/><path d="M20 62C14 30 22 10 44 10C64 10 72 30 66 62Z" fill="#e2c27e"/><ellipse cx="43" cy="40" rx="14" ry="20" fill="#e6c6b4"/><path d="M28 20Q44 12 60 22L60 28Q44 20 28 28Z" fill="#e2c27e"/><path d="M4 85L10 66L30 60L44 72L60 60L76 66L85 85Z" fill="#141418"/><path d="M32 70L44 80L58 70" fill="#1e2440"/></g></g></svg><div class="lbl m"><svg class="mic" viewBox="0 0 13 14"><rect x="2.8" y="0.6" width="6.2" height="10.6" rx="3.1" fill="#ee5868"/><rect x="3.6" y="11.8" width="4.8" height="1.7" fill="#ee5868"/><path d="M0.2 13.6L12.6 0.4" stroke="#2a2020" stroke-width="2.4"/><path d="M0.2 13.6L12.6 0.4" stroke="#e7848c" stroke-width="1.2"/></svg>Ірина Чернова</div></div>
<div class="tile" style="left:1519px;top:425px"><div class="cn">Замула Диана</div><div class="lbl m"><svg class="mic" viewBox="0 0 13 14"><rect x="2.8" y="0.6" width="6.2" height="10.6" rx="3.1" fill="#ee5868"/><rect x="3.6" y="11.8" width="4.8" height="1.7" fill="#ee5868"/><path d="M0.2 13.6L12.6 0.4" stroke="#2a2020" stroke-width="2.4"/><path d="M0.2 13.6L12.6 0.4" stroke="#e7848c" stroke-width="1.2"/></svg>Замула Диана</div></div>
<div class="tile" style="left:1701px;top:425px"><div class="cn">Ірина  Чернова(...</div><div class="lbl m"><svg class="mic" viewBox="0 0 13 14"><rect x="2.8" y="0.6" width="6.2" height="10.6" rx="3.1" fill="#ee5868"/><rect x="3.6" y="11.8" width="4.8" height="1.7" fill="#ee5868"/><path d="M0.2 13.6L12.6 0.4" stroke="#2a2020" stroke-width="2.4"/><path d="M0.2 13.6L12.6 0.4" stroke="#e7848c" stroke-width="1.2"/></svg>Ірина Чернова(Запоріз...</div></div>
<div class="tile" style="left:1155px;top:530px"><div class="cn">Чалий Кирило</div><div class="lbl m"><svg class="mic" viewBox="0 0 13 14"><rect x="2.8" y="0.6" width="6.2" height="10.6" rx="3.1" fill="#ee5868"/><rect x="3.6" y="11.8" width="4.8" height="1.7" fill="#ee5868"/><path d="M0.2 13.6L12.6 0.4" stroke="#2a2020" stroke-width="2.4"/><path d="M0.2 13.6L12.6 0.4" stroke="#e7848c" stroke-width="1.2"/></svg>Чалий Кирило</div></div>
<div class="tile" style="left:1337px;top:530px"><div class="cn">Сергій Байдала</div><div class="lbl">Сергій Байдала</div></div>
<div class="tile" style="left:1519px;top:530px"><div class="cn">Олена  Григор'єва</div><div class="lbl m"><svg class="mic" viewBox="0 0 13 14"><rect x="2.8" y="0.6" width="6.2" height="10.6" rx="3.1" fill="#ee5868"/><rect x="3.6" y="11.8" width="4.8" height="1.7" fill="#ee5868"/><path d="M0.2 13.6L12.6 0.4" stroke="#2a2020" stroke-width="2.4"/><path d="M0.2 13.6L12.6 0.4" stroke="#e7848c" stroke-width="1.2"/></svg>Олена Григор'єва</div></div>
<div class="tile" style="left:1701px;top:530px"><div class="cn">Левченко Сергій</div><div class="lbl">Левченко Сергій</div></div>
<div class="tile" style="left:1155px;top:635px"><div class="av" style="background:#c8185a">K</div><div class="lbl m"><svg class="mic" viewBox="0 0 13 14"><rect x="2.8" y="0.6" width="6.2" height="10.6" rx="3.1" fill="#ee5868"/><rect x="3.6" y="11.8" width="4.8" height="1.7" fill="#ee5868"/><path d="M0.2 13.6L12.6 0.4" stroke="#2a2020" stroke-width="2.4"/><path d="M0.2 13.6L12.6 0.4" stroke="#e7848c" stroke-width="1.2"/></svg>Карина Меньшикова</div></div>
<div class="tile" style="left:1337px;top:635px"><div class="cn">Шмарко  Єлиза...</div><div class="lbl m"><svg class="mic" viewBox="0 0 13 14"><rect x="2.8" y="0.6" width="6.2" height="10.6" rx="3.1" fill="#ee5868"/><rect x="3.6" y="11.8" width="4.8" height="1.7" fill="#ee5868"/><path d="M0.2 13.6L12.6 0.4" stroke="#2a2020" stroke-width="2.4"/><path d="M0.2 13.6L12.6 0.4" stroke="#e7848c" stroke-width="1.2"/></svg>Шмарко Єлизавета</div></div>
<div class="tile" style="left:1519px;top:635px"><svg class="a" style="left:48px;top:9px" width="80" height="80" viewBox="0 0 80 80"><defs><filter id="blvanya" x="-10%" y="-10%" width="120%" height="120%"><feGaussianBlur stdDeviation="1.3"/></filter><clipPath id="cpvanya"><rect width="80" height="80"/></clipPath></defs><g clip-path="url(#cpvanya)"><g filter="url(#blvanya)"><rect x="-5" y="-5" width="90" height="90" fill="#c4c49e"/><rect x="40" y="-5" width="45" height="20" fill="#dcdcc8"/><ellipse cx="62" cy="24" rx="14" ry="8" fill="#a8b870"/><ellipse cx="68" cy="40" rx="10" ry="6" fill="#c8b890"/><path d="M-5 30L12 30L22 70L-5 72Z" fill="#2a2226"/><path d="M45 38L70 42L80 44L80 50L48 50Z" fill="#2a2a30"/><ellipse cx="30" cy="18" rx="22" ry="14" fill="#8c7462"/><ellipse cx="30" cy="34" rx="20" ry="25" fill="#b08a78"/><path d="M-5 85L4 68L22 60L40 62L56 46L80 42L85 85Z" fill="#48525a"/></g></g></svg><div class="lbl m"><svg class="mic" viewBox="0 0 13 14"><rect x="2.8" y="0.6" width="6.2" height="10.6" rx="3.1" fill="#ee5868"/><rect x="3.6" y="11.8" width="4.8" height="1.7" fill="#ee5868"/><path d="M0.2 13.6L12.6 0.4" stroke="#2a2020" stroke-width="2.4"/><path d="M0.2 13.6L12.6 0.4" stroke="#e7848c" stroke-width="1.2"/></svg>Ваня Рашевский</div></div>
<div class="tile" style="left:1701px;top:635px"><div class="cn">Плетінь Тетяна</div><div class="lbl m"><svg class="mic" viewBox="0 0 13 14"><rect x="2.8" y="0.6" width="6.2" height="10.6" rx="3.1" fill="#ee5868"/><rect x="3.6" y="11.8" width="4.8" height="1.7" fill="#ee5868"/><path d="M0.2 13.6L12.6 0.4" stroke="#2a2020" stroke-width="2.4"/><path d="M0.2 13.6L12.6 0.4" stroke="#e7848c" stroke-width="1.2"/></svg>Плетінь Тетяна</div></div>
<div class="tile" style="left:1247px;top:740px"><div class="cn">Наталья Бобко</div><div class="lbl m"><svg class="mic" viewBox="0 0 13 14"><rect x="2.8" y="0.6" width="6.2" height="10.6" rx="3.1" fill="#ee5868"/><rect x="3.6" y="11.8" width="4.8" height="1.7" fill="#ee5868"/><path d="M0.2 13.6L12.6 0.4" stroke="#2a2020" stroke-width="2.4"/><path d="M0.2 13.6L12.6 0.4" stroke="#e7848c" stroke-width="1.2"/></svg>Наталья Бобко</div></div>
<div class="tile" style="left:1428px;top:740px"><svg class="a" style="left:48px;top:9px" width="80" height="80" viewBox="0 0 80 80"><defs><filter id="blolena" x="-10%" y="-10%" width="120%" height="120%"><feGaussianBlur stdDeviation="1.3"/></filter><clipPath id="cpolena"><rect width="80" height="80"/></clipPath></defs><g clip-path="url(#cpolena)"><g filter="url(#blolena)"><rect x="-5" y="-5" width="90" height="90" fill="#e6dab8"/><rect x="1" y="4" width="11" height="12" fill="#6a6a6a"/><rect x="17" y="4" width="17" height="12" fill="#555"/><rect x="39" y="4" width="15" height="12" fill="#4a3a5a"/><rect x="57" y="4" width="16" height="12" fill="#3a3a3a"/><rect x="7" y="23" width="27" height="2.5" fill="#6a6250"/><rect x="9" y="35" width="28" height="35" fill="#8c8e7a"/><path d="M36 62C32 34 42 26 52 26C64 26 70 36 66 62Z" fill="#241814"/><ellipse cx="51" cy="43" rx="9" ry="12" fill="#b88e7c"/><path d="M26 85L32 62L50 56L68 62L76 85Z" fill="#161214"/></g></g></svg><div class="lbl m"><svg class="mic" viewBox="0 0 13 14"><rect x="2.8" y="0.6" width="6.2" height="10.6" rx="3.1" fill="#ee5868"/><rect x="3.6" y="11.8" width="4.8" height="1.7" fill="#ee5868"/><path d="M0.2 13.6L12.6 0.4" stroke="#2a2020" stroke-width="2.4"/><path d="M0.2 13.6L12.6 0.4" stroke="#e7848c" stroke-width="1.2"/></svg>Олена Крайнік</div></div>
<div class="tile" style="left:1610px;top:740px"><div class="cn">Rodion  Sevastya...</div><div class="lbl m"><svg class="mic" viewBox="0 0 13 14"><rect x="2.8" y="0.6" width="6.2" height="10.6" rx="3.1" fill="#ee5868"/><rect x="3.6" y="11.8" width="4.8" height="1.7" fill="#ee5868"/><path d="M0.2 13.6L12.6 0.4" stroke="#2a2020" stroke-width="2.4"/><path d="M0.2 13.6L12.6 0.4" stroke="#e7848c" stroke-width="1.2"/></svg>Rodion Sevastyanov</div></div>


</body></html>
